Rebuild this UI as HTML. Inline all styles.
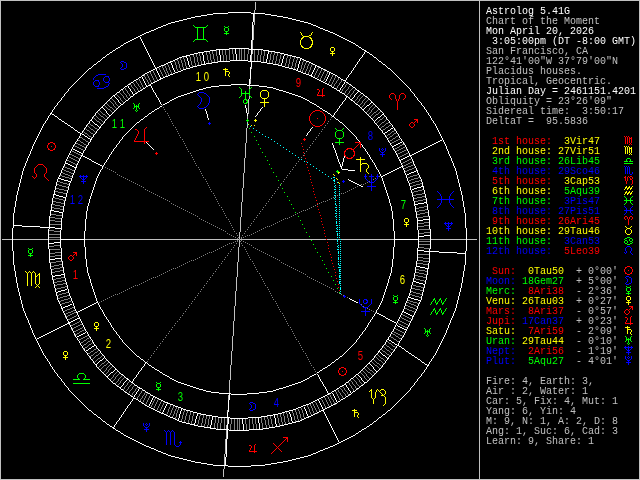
<!DOCTYPE html>
<html lang="en"><head><meta charset="utf-8"><title>Astrolog 5.41G - Chart of the Moment</title>
<style>
html,body{margin:0;padding:0;background:#000;overflow:hidden}
svg{display:block;will-change:transform;transform:translateZ(0)}
.px path{fill:none;stroke-width:1;shape-rendering:crispEdges}
.gl{fill:none;stroke-width:1;shape-rendering:crispEdges;stroke-linecap:square}
.hn{font-family:"Liberation Sans","DejaVu Sans",sans-serif;font-size:12.6px;text-anchor:middle;stroke:none;shape-rendering:auto}
.tx text{font-family:"Liberation Mono","DejaVu Sans Mono",monospace;font-size:10px;white-space:pre;}
</style></head><body>
<svg width="640" height="480" viewBox="0 0 640 480">
<rect width="640" height="480" fill="#000"/>
<g class="px" transform="translate(0,0.5)">
<path stroke="#c0c0c0" d="M0 0h640M0 1h1M479 1h1M639 1h1M0 2h1M255 2h1M479 2h1M639 2h1M0 3h1M255 3h1M479 3h1M639 3h1M0 4h1M255 4h1M479 4h1M639 4h1M0 5h1M255 5h1M479 5h1M639 5h1M0 6h1M255 6h1M479 6h1M639 6h1M0 7h1M255 7h1M479 7h1M639 7h1M0 8h1M255 8h1M479 8h1M639 8h1M0 9h1M255 9h1M479 9h1M639 9h1M0 10h1M254 10h1M479 10h1M639 10h1M0 11h1M254 11h1M479 11h1M639 11h1M0 12h1M254 12h1M479 12h1M639 12h1M0 13h1M479 13h1M639 13h1M0 14h1M254 14h1M479 14h1M639 14h1M0 15h1M254 15h1M479 15h1M639 15h1M0 16h1M254 16h1M479 16h1M639 16h1M0 17h1M254 17h1M479 17h1M639 17h1M0 18h1M254 18h1M479 18h1M639 18h1M0 19h1M254 19h1M479 19h1M639 19h1M0 20h1M254 20h1M479 20h1M639 20h1M0 21h1M254 21h1M479 21h1M639 21h1M0 22h1M254 22h1M479 22h1M639 22h1M0 23h1M254 23h1M479 23h1M639 23h1M0 24h1M254 24h1M479 24h1M639 24h1M0 25h1M253 25h1M479 25h1M639 25h1M0 26h1M253 26h1M479 26h1M639 26h1M0 27h1M253 27h1M479 27h1M639 27h1M0 28h1M253 28h1M479 28h1M639 28h1M0 29h1M253 29h1M479 29h1M639 29h1M0 30h1M253 30h1M479 30h1M639 30h1M0 31h1M253 31h1M479 31h1M639 31h1M0 32h1M253 32h1M479 32h1M639 32h1M0 33h1M253 33h1M479 33h1M639 33h1M0 34h1M253 34h1M479 34h1M639 34h1M0 35h1M253 35h1M479 35h1M639 35h1M0 36h1M253 36h1M479 36h1M639 36h1M0 37h1M253 37h1M479 37h1M639 37h1M0 38h1M253 38h1M479 38h1M639 38h1M0 39h1M253 39h1M479 39h1M639 39h1M0 40h1M252 40h1M479 40h1M639 40h1M0 41h1M252 41h1M479 41h1M639 41h1M0 42h1M252 42h1M479 42h1M639 42h1M0 43h1M252 43h1M479 43h1M639 43h1M0 44h1M252 44h1M479 44h1M639 44h1M0 45h1M252 45h1M479 45h1M639 45h1M0 46h1M252 46h1M479 46h1M639 46h1M0 47h1M252 47h1M479 47h1M639 47h1M0 48h1M252 48h1M479 48h1M639 48h1M0 49h1M479 49h1M639 49h1M0 50h1M252 50h1M479 50h1M639 50h1M0 51h1M252 51h1M479 51h1M639 51h1M0 52h1M252 52h1M479 52h1M639 52h1M0 53h1M252 53h1M479 53h1M639 53h1M0 54h1M479 54h1M639 54h1M0 55h1M251 55h1M479 55h1M639 55h1M0 56h1M251 56h1M479 56h1M639 56h1M0 57h1M251 57h1M479 57h1M639 57h1M0 58h1M251 58h1M479 58h1M639 58h1M0 59h1M251 59h1M479 59h1M639 59h1M0 60h1M251 60h1M479 60h1M639 60h1M0 61h1M479 61h1M639 61h1M0 62h1M479 62h1M639 62h1M0 63h1M479 63h1M639 63h1M0 64h1M479 64h1M639 64h1M0 65h1M479 65h1M639 65h1M0 66h1M479 66h1M639 66h1M0 67h1M251 67h1M479 67h1M639 67h1M0 68h1M251 68h1M479 68h1M639 68h1M0 69h1M479 69h1M639 69h1M0 70h1M479 70h1M639 70h1M0 71h1M479 71h1M639 71h1M0 72h1M479 72h1M639 72h1M0 73h1M479 73h1M639 73h1M0 74h1M479 74h1M639 74h1M0 75h1M479 75h1M639 75h1M0 76h1M479 76h1M639 76h1M0 77h1M479 77h1M639 77h1M0 78h1M479 78h1M639 78h1M0 79h1M250 79h1M479 79h1M639 79h1M0 80h1M250 80h1M479 80h1M639 80h1M0 81h1M250 81h1M479 81h1M639 81h1M0 82h1M250 82h1M479 82h1M639 82h1M0 83h1M250 83h1M479 83h1M639 83h1M0 84h1M479 84h1M639 84h1M0 85h1M479 85h1M639 85h1M0 86h1M249 86h1M479 86h1M639 86h1M0 87h1M249 87h1M479 87h1M639 87h1M0 88h1M249 88h1M479 88h1M639 88h1M0 89h1M479 89h1M639 89h1M0 90h1M479 90h1M639 90h1M0 91h1M479 91h1M639 91h1M0 92h1M479 92h1M639 92h1M0 93h1M479 93h1M639 93h1M0 94h1M479 94h1M639 94h1M0 95h1M479 95h1M639 95h1M0 96h1M249 96h1M479 96h1M639 96h1M0 97h1M249 97h1M479 97h1M639 97h1M0 98h1M249 98h1M479 98h1M639 98h1M0 99h1M248 99h1M479 99h1M639 99h1M0 100h1M248 100h1M479 100h1M639 100h1M0 101h1M248 101h1M479 101h1M639 101h1M0 102h1M248 102h1M479 102h1M639 102h1M0 103h1M248 103h1M479 103h1M639 103h1M0 104h1M248 104h1M479 104h1M639 104h1M0 105h1M248 105h1M479 105h1M639 105h1M0 106h1M248 106h1M479 106h1M639 106h1M0 107h1M248 107h1M479 107h1M639 107h1M0 108h1M248 108h1M479 108h1M639 108h1M0 109h1M248 109h1M479 109h1M639 109h1M0 110h1M248 110h1M479 110h1M639 110h1M0 111h1M248 111h1M479 111h1M639 111h1M0 112h1M248 112h1M479 112h1M639 112h1M0 113h1M248 113h1M479 113h1M639 113h1M0 114h1M479 114h1M639 114h1M0 115h1M479 115h1M639 115h1M0 116h1M247 116h1M479 116h1M639 116h1M0 117h1M247 117h1M479 117h1M639 117h1M0 118h1M247 118h1M479 118h1M639 118h1M0 119h1M479 119h1M639 119h1M0 120h1M479 120h1M639 120h1M0 121h1M479 121h1M639 121h1M0 122h1M247 122h1M479 122h1M639 122h1M0 123h1M247 123h1M479 123h1M639 123h1M0 124h1M479 124h1M639 124h1M0 125h1M247 125h1M479 125h1M639 125h1M0 126h1M247 126h1M479 126h1M639 126h1M0 127h1M247 127h1M479 127h1M639 127h1M0 128h1M246 128h1M479 128h1M639 128h1M0 129h1M246 129h1M479 129h1M639 129h1M0 130h1M246 130h1M479 130h1M639 130h1M0 131h1M246 131h1M479 131h1M639 131h1M0 132h1M246 132h1M479 132h1M639 132h1M0 133h1M246 133h1M479 133h1M639 133h1M0 134h1M246 134h1M479 134h1M639 134h1M0 135h1M246 135h1M479 135h1M639 135h1M0 136h1M246 136h1M479 136h1M639 136h1M0 137h1M246 137h1M479 137h1M639 137h1M0 138h1M246 138h1M479 138h1M639 138h1M0 139h1M246 139h1M479 139h1M639 139h1M0 140h1M246 140h1M479 140h1M639 140h1M0 141h1M246 141h1M479 141h1M639 141h1M0 142h1M246 142h1M479 142h1M639 142h1M0 143h1M245 143h1M479 143h1M639 143h1M0 144h1M245 144h1M479 144h1M639 144h1M0 145h1M245 145h1M479 145h1M639 145h1M0 146h1M245 146h1M479 146h1M639 146h1M0 147h1M245 147h1M479 147h1M639 147h1M0 148h1M245 148h1M479 148h1M639 148h1M0 149h1M245 149h1M479 149h1M639 149h1M0 150h1M245 150h1M479 150h1M639 150h1M0 151h1M245 151h1M479 151h1M639 151h1M0 152h1M245 152h1M479 152h1M639 152h1M0 153h1M245 153h1M479 153h1M639 153h1M0 154h1M245 154h1M479 154h1M639 154h1M0 155h1M245 155h1M479 155h1M639 155h1M0 156h1M245 156h1M479 156h1M639 156h1M0 157h1M245 157h1M479 157h1M639 157h1M0 158h1M244 158h1M479 158h1M639 158h1M0 159h1M244 159h1M479 159h1M639 159h1M0 160h1M244 160h1M479 160h1M639 160h1M0 161h1M244 161h1M479 161h1M639 161h1M0 162h1M244 162h1M479 162h1M639 162h1M0 163h1M244 163h1M479 163h1M639 163h1M0 164h1M244 164h1M479 164h1M639 164h1M0 165h1M244 165h1M479 165h1M639 165h1M0 166h1M244 166h1M479 166h1M639 166h1M0 167h1M244 167h1M479 167h1M639 167h1M0 168h1M244 168h1M479 168h1M639 168h1M0 169h1M244 169h1M479 169h1M639 169h1M0 170h1M244 170h1M479 170h1M639 170h1M0 171h1M244 171h1M479 171h1M639 171h1M0 172h1M244 172h1M479 172h1M639 172h1M0 173h1M243 173h1M479 173h1M639 173h1M0 174h1M243 174h1M479 174h1M639 174h1M0 175h1M243 175h1M479 175h1M639 175h1M0 176h1M243 176h1M479 176h1M639 176h1M0 177h1M243 177h1M479 177h1M639 177h1M0 178h1M243 178h1M479 178h1M639 178h1M0 179h1M243 179h1M479 179h1M639 179h1M0 180h1M243 180h1M479 180h1M639 180h1M0 181h1M243 181h1M479 181h1M639 181h1M0 182h1M243 182h1M479 182h1M639 182h1M0 183h1M243 183h1M479 183h1M639 183h1M0 184h1M243 184h1M479 184h1M639 184h1M0 185h1M243 185h1M479 185h1M639 185h1M0 186h1M243 186h1M479 186h1M639 186h1M0 187h1M243 187h1M479 187h1M639 187h1M0 188h1M242 188h1M479 188h1M639 188h1M0 189h1M242 189h1M479 189h1M639 189h1M0 190h1M242 190h1M479 190h1M639 190h1M0 191h1M242 191h1M479 191h1M639 191h1M0 192h1M242 192h1M479 192h1M639 192h1M0 193h1M242 193h1M479 193h1M639 193h1M0 194h1M242 194h1M479 194h1M639 194h1M0 195h1M242 195h1M479 195h1M639 195h1M0 196h1M242 196h1M479 196h1M639 196h1M0 197h1M242 197h1M479 197h1M639 197h1M0 198h1M242 198h1M479 198h1M639 198h1M0 199h1M242 199h1M479 199h1M639 199h1M0 200h1M242 200h1M479 200h1M639 200h1M0 201h1M242 201h1M479 201h1M639 201h1M0 202h1M241 202h1M479 202h1M639 202h1M0 203h1M241 203h1M479 203h1M639 203h1M0 204h1M241 204h1M479 204h1M639 204h1M0 205h1M241 205h1M479 205h1M639 205h1M0 206h1M241 206h1M479 206h1M639 206h1M0 207h1M241 207h1M479 207h1M639 207h1M0 208h1M241 208h1M479 208h1M639 208h1M0 209h1M241 209h1M479 209h1M639 209h1M0 210h1M241 210h1M479 210h1M639 210h1M0 211h1M241 211h1M479 211h1M639 211h1M0 212h1M241 212h1M479 212h1M639 212h1M0 213h1M241 213h1M479 213h1M639 213h1M0 214h1M241 214h1M479 214h1M639 214h1M0 215h1M241 215h1M479 215h1M639 215h1M0 216h1M241 216h1M479 216h1M639 216h1M0 217h1M240 217h1M479 217h1M639 217h1M0 218h1M240 218h1M479 218h1M639 218h1M0 219h1M240 219h1M479 219h1M639 219h1M0 220h1M240 220h1M479 220h1M639 220h1M0 221h1M240 221h1M479 221h1M639 221h1M0 222h1M240 222h1M479 222h1M639 222h1M0 223h1M240 223h1M479 223h1M639 223h1M0 224h1M240 224h1M479 224h1M639 224h1M0 225h1M240 225h1M479 225h1M639 225h1M0 226h1M240 226h1M479 226h1M639 226h1M0 227h1M240 227h1M479 227h1M639 227h1M0 228h1M240 228h1M479 228h1M639 228h1M0 229h1M240 229h1M479 229h1M639 229h1M0 230h1M240 230h1M479 230h1M639 230h1M0 231h1M240 231h1M479 231h1M639 231h1M0 232h1M239 232h1M479 232h1M639 232h1M0 233h1M239 233h1M479 233h1M639 233h1M0 234h1M239 234h1M479 234h1M639 234h1M0 235h1M239 235h1M479 235h1M639 235h1M0 236h1M239 236h1M479 236h1M639 236h1M0 237h1M239 237h1M479 237h1M639 237h1M0 238h1M239 238h1M479 238h1M639 238h1M0 239h1M2 239h10M13 239h35M85 239h154M240 239h86M327 239h10M338 239h2M341 239h53M431 239h35M467 239h10M479 239h1M639 239h1M0 240h1M239 240h1M479 240h1M639 240h1M0 241h1M239 241h1M479 241h1M639 241h1M0 242h1M239 242h1M479 242h1M639 242h1M0 243h1M239 243h1M479 243h1M639 243h1M0 244h1M239 244h1M479 244h1M639 244h1M0 245h1M239 245h1M479 245h1M639 245h1M0 246h1M239 246h1M479 246h1M639 246h1M0 247h1M238 247h1M479 247h1M639 247h1M0 248h1M238 248h1M479 248h1M639 248h1M0 249h1M238 249h1M479 249h1M639 249h1M0 250h1M238 250h1M479 250h1M639 250h1M0 251h1M238 251h1M479 251h1M639 251h1M0 252h1M238 252h1M479 252h1M639 252h1M0 253h1M238 253h1M479 253h1M639 253h1M0 254h1M238 254h1M479 254h1M639 254h1M0 255h1M238 255h1M479 255h1M639 255h1M0 256h1M238 256h1M479 256h1M639 256h1M0 257h1M238 257h1M479 257h1M639 257h1M0 258h1M238 258h1M479 258h1M639 258h1M0 259h1M238 259h1M479 259h1M639 259h1M0 260h1M238 260h1M479 260h1M639 260h1M0 261h1M238 261h1M479 261h1M639 261h1M0 262h1M237 262h1M479 262h1M639 262h1M0 263h1M237 263h1M479 263h1M639 263h1M0 264h1M237 264h1M479 264h1M639 264h1M0 265h1M237 265h1M479 265h1M639 265h1M0 266h1M237 266h1M479 266h1M639 266h1M0 267h1M237 267h1M479 267h1M639 267h1M0 268h1M237 268h1M479 268h1M639 268h1M0 269h1M237 269h1M479 269h1M639 269h1M0 270h1M237 270h1M479 270h1M639 270h1M0 271h1M237 271h1M479 271h1M639 271h1M0 272h1M237 272h1M479 272h1M639 272h1M0 273h1M237 273h1M479 273h1M639 273h1M0 274h1M237 274h1M479 274h1M639 274h1M0 275h1M237 275h1M479 275h1M639 275h1M0 276h1M237 276h1M479 276h1M639 276h1M0 277h1M236 277h1M479 277h1M639 277h1M0 278h1M236 278h1M479 278h1M639 278h1M0 279h1M236 279h1M479 279h1M639 279h1M0 280h1M236 280h1M479 280h1M639 280h1M0 281h1M236 281h1M479 281h1M639 281h1M0 282h1M236 282h1M479 282h1M639 282h1M0 283h1M236 283h1M479 283h1M639 283h1M0 284h1M236 284h1M479 284h1M639 284h1M0 285h1M236 285h1M479 285h1M639 285h1M0 286h1M236 286h1M479 286h1M639 286h1M0 287h1M236 287h1M479 287h1M639 287h1M0 288h1M236 288h1M479 288h1M639 288h1M0 289h1M236 289h1M479 289h1M639 289h1M0 290h1M236 290h1M479 290h1M639 290h1M0 291h1M235 291h1M479 291h1M639 291h1M0 292h1M235 292h1M479 292h1M639 292h1M0 293h1M235 293h1M479 293h1M639 293h1M0 294h1M235 294h1M479 294h1M639 294h1M0 295h1M235 295h1M479 295h1M639 295h1M0 296h1M235 296h1M479 296h1M639 296h1M0 297h1M235 297h1M479 297h1M639 297h1M0 298h1M235 298h1M479 298h1M639 298h1M0 299h1M235 299h1M479 299h1M639 299h1M0 300h1M235 300h1M479 300h1M639 300h1M0 301h1M235 301h1M479 301h1M639 301h1M0 302h1M235 302h1M479 302h1M639 302h1M0 303h1M235 303h1M479 303h1M639 303h1M0 304h1M235 304h1M479 304h1M639 304h1M0 305h1M235 305h1M479 305h1M639 305h1M0 306h1M234 306h1M479 306h1M639 306h1M0 307h1M234 307h1M479 307h1M639 307h1M0 308h1M234 308h1M479 308h1M639 308h1M0 309h1M234 309h1M479 309h1M639 309h1M0 310h1M234 310h1M479 310h1M639 310h1M0 311h1M234 311h1M479 311h1M639 311h1M0 312h1M234 312h1M479 312h1M639 312h1M0 313h1M234 313h1M479 313h1M639 313h1M0 314h1M234 314h1M479 314h1M639 314h1M0 315h1M234 315h1M479 315h1M639 315h1M0 316h1M234 316h1M479 316h1M639 316h1M0 317h1M234 317h1M479 317h1M639 317h1M0 318h1M234 318h1M479 318h1M639 318h1M0 319h1M234 319h1M479 319h1M639 319h1M0 320h1M234 320h1M479 320h1M639 320h1M0 321h1M233 321h1M479 321h1M639 321h1M0 322h1M233 322h1M479 322h1M639 322h1M0 323h1M233 323h1M479 323h1M639 323h1M0 324h1M233 324h1M479 324h1M639 324h1M0 325h1M233 325h1M479 325h1M639 325h1M0 326h1M233 326h1M479 326h1M639 326h1M0 327h1M233 327h1M479 327h1M639 327h1M0 328h1M233 328h1M479 328h1M639 328h1M0 329h1M233 329h1M479 329h1M639 329h1M0 330h1M233 330h1M479 330h1M639 330h1M0 331h1M233 331h1M479 331h1M639 331h1M0 332h1M233 332h1M479 332h1M639 332h1M0 333h1M233 333h1M479 333h1M639 333h1M0 334h1M233 334h1M479 334h1M639 334h1M0 335h1M233 335h1M479 335h1M639 335h1M0 336h1M232 336h1M479 336h1M639 336h1M0 337h1M232 337h1M479 337h1M639 337h1M0 338h1M232 338h1M479 338h1M639 338h1M0 339h1M232 339h1M479 339h1M639 339h1M0 340h1M232 340h1M479 340h1M639 340h1M0 341h1M232 341h1M479 341h1M639 341h1M0 342h1M232 342h1M479 342h1M639 342h1M0 343h1M232 343h1M479 343h1M639 343h1M0 344h1M232 344h1M479 344h1M639 344h1M0 345h1M232 345h1M479 345h1M639 345h1M0 346h1M232 346h1M479 346h1M639 346h1M0 347h1M232 347h1M479 347h1M639 347h1M0 348h1M232 348h1M479 348h1M639 348h1M0 349h1M232 349h1M479 349h1M639 349h1M0 350h1M232 350h1M479 350h1M639 350h1M0 351h1M231 351h1M479 351h1M639 351h1M0 352h1M231 352h1M479 352h1M639 352h1M0 353h1M231 353h1M479 353h1M639 353h1M0 354h1M231 354h1M479 354h1M639 354h1M0 355h1M231 355h1M479 355h1M639 355h1M0 356h1M231 356h1M479 356h1M639 356h1M0 357h1M231 357h1M479 357h1M639 357h1M0 358h1M231 358h1M479 358h1M639 358h1M0 359h1M231 359h1M479 359h1M639 359h1M0 360h1M231 360h1M479 360h1M639 360h1M0 361h1M231 361h1M479 361h1M639 361h1M0 362h1M231 362h1M479 362h1M639 362h1M0 363h1M231 363h1M479 363h1M639 363h1M0 364h1M231 364h1M479 364h1M639 364h1M0 365h1M230 365h1M479 365h1M639 365h1M0 366h1M230 366h1M479 366h1M639 366h1M0 367h1M230 367h1M479 367h1M639 367h1M0 368h1M230 368h1M479 368h1M639 368h1M0 369h1M230 369h1M479 369h1M639 369h1M0 370h1M230 370h1M479 370h1M639 370h1M0 371h1M230 371h1M479 371h1M639 371h1M0 372h1M230 372h1M479 372h1M639 372h1M0 373h1M230 373h1M479 373h1M639 373h1M0 374h1M230 374h1M479 374h1M639 374h1M0 375h1M230 375h1M479 375h1M639 375h1M0 376h1M230 376h1M479 376h1M639 376h1M0 377h1M230 377h1M479 377h1M639 377h1M0 378h1M230 378h1M479 378h1M639 378h1M0 379h1M230 379h1M479 379h1M639 379h1M0 380h1M229 380h1M479 380h1M639 380h1M0 381h1M229 381h1M479 381h1M639 381h1M0 382h1M229 382h1M479 382h1M639 382h1M0 383h1M229 383h1M479 383h1M639 383h1M0 384h1M229 384h1M479 384h1M639 384h1M0 385h1M229 385h1M479 385h1M639 385h1M0 386h1M229 386h1M479 386h1M639 386h1M0 387h1M229 387h1M479 387h1M639 387h1M0 388h1M229 388h1M479 388h1M639 388h1M0 389h1M229 389h1M479 389h1M639 389h1M0 390h1M229 390h1M479 390h1M639 390h1M0 391h1M229 391h1M479 391h1M639 391h1M0 392h1M229 392h1M479 392h1M639 392h1M0 393h1M479 393h1M639 393h1M0 394h1M479 394h1M639 394h1M0 395h1M228 395h1M479 395h1M639 395h1M0 396h1M228 396h1M479 396h1M639 396h1M0 397h1M228 397h1M479 397h1M639 397h1M0 398h1M228 398h1M479 398h1M639 398h1M0 399h1M228 399h1M479 399h1M639 399h1M0 400h1M479 400h1M639 400h1M0 401h1M479 401h1M639 401h1M0 402h1M479 402h1M639 402h1M0 403h1M479 403h1M639 403h1M0 404h1M479 404h1M639 404h1M0 405h1M479 405h1M639 405h1M0 406h1M479 406h1M639 406h1M0 407h1M479 407h1M639 407h1M0 408h1M479 408h1M639 408h1M0 409h1M479 409h1M639 409h1M0 410h1M227 410h1M479 410h1M639 410h1M0 411h1M227 411h1M479 411h1M639 411h1M0 412h1M479 412h1M639 412h1M0 413h1M479 413h1M639 413h1M0 414h1M479 414h1M639 414h1M0 415h1M479 415h1M639 415h1M0 416h1M479 416h1M639 416h1M0 417h1M479 417h1M639 417h1M0 418h1M227 418h1M479 418h1M639 418h1M0 419h1M227 419h1M479 419h1M639 419h1M0 420h1M227 420h1M479 420h1M639 420h1M0 421h1M227 421h1M479 421h1M639 421h1M0 422h1M227 422h1M479 422h1M639 422h1M0 423h1M227 423h1M479 423h1M639 423h1M0 424h1M479 424h1M639 424h1M0 425h1M226 425h1M479 425h1M639 425h1M0 426h1M226 426h1M479 426h1M639 426h1M0 427h1M226 427h1M479 427h1M639 427h1M0 428h1M226 428h1M479 428h1M639 428h1M0 429h1M479 429h1M639 429h1M0 430h1M226 430h1M479 430h1M639 430h1M0 431h1M226 431h1M479 431h1M639 431h1M0 432h1M226 432h1M479 432h1M639 432h1M0 433h1M226 433h1M479 433h1M639 433h1M0 434h1M226 434h1M479 434h1M639 434h1M0 435h1M226 435h1M479 435h1M639 435h1M0 436h1M226 436h1M479 436h1M639 436h1M0 437h1M226 437h1M479 437h1M639 437h1M0 438h1M226 438h1M479 438h1M639 438h1M0 439h1M225 439h1M479 439h1M639 439h1M0 440h1M225 440h1M479 440h1M639 440h1M0 441h1M225 441h1M479 441h1M639 441h1M0 442h1M225 442h1M479 442h1M639 442h1M0 443h1M225 443h1M479 443h1M639 443h1M0 444h1M225 444h1M479 444h1M639 444h1M0 445h1M225 445h1M479 445h1M639 445h1M0 446h1M225 446h1M479 446h1M639 446h1M0 447h1M225 447h1M479 447h1M639 447h1M0 448h1M225 448h1M479 448h1M639 448h1M0 449h1M225 449h1M479 449h1M639 449h1M0 450h1M225 450h1M479 450h1M639 450h1M0 451h1M225 451h1M479 451h1M639 451h1M0 452h1M225 452h1M479 452h1M639 452h1M0 453h1M225 453h1M479 453h1M639 453h1M0 454h1M224 454h1M479 454h1M639 454h1M0 455h1M224 455h1M479 455h1M639 455h1M0 456h1M224 456h1M479 456h1M639 456h1M0 457h1M224 457h1M479 457h1M639 457h1M0 458h1M224 458h1M479 458h1M639 458h1M0 459h1M224 459h1M479 459h1M639 459h1M0 460h1M224 460h1M479 460h1M639 460h1M0 461h1M224 461h1M479 461h1M639 461h1M0 462h1M224 462h1M479 462h1M639 462h1M0 463h1M224 463h1M479 463h1M639 463h1M0 464h1M224 464h1M479 464h1M639 464h1M0 465h1M479 465h1M639 465h1M0 466h1M224 466h1M479 466h1M639 466h1M0 467h1M224 467h1M479 467h1M639 467h1M0 468h1M224 468h1M479 468h1M639 468h1M0 469h1M223 469h1M479 469h1M639 469h1M0 470h1M223 470h1M479 470h1M639 470h1M0 471h1M223 471h1M479 471h1M639 471h1M0 472h1M223 472h1M479 472h1M639 472h1M0 473h1M223 473h1M479 473h1M639 473h1M0 474h1M223 474h1M479 474h1M639 474h1M0 475h1M223 475h1M479 475h1M639 475h1M0 476h1M223 476h1M479 476h1M639 476h1M0 477h1M479 477h1M639 477h1M0 478h1M479 478h1M639 478h1M0 479h640"/>
<path stroke="#ffffff" d="M228 12h23M213 13h15M251 13h14M207 14h6M253 14h1M265 14h6M201 15h6M253 15h1M271 15h6M195 16h6M253 16h1M277 16h6M191 17h4M253 17h1M283 17h5M187 18h4M253 18h1M288 18h4M183 19h4M253 19h1M292 19h4M179 20h4M253 20h1M296 20h4M175 21h4M253 21h1M300 21h4M171 22h4M252 22h1M304 22h4M168 23h3M252 23h1M308 23h3M166 24h2M252 24h1M311 24h2M163 25h3M252 25h1M313 25h3M161 26h2M252 26h1M316 26h2M158 27h3M252 27h1M318 27h2M156 28h2M252 28h1M320 28h3M154 29h2M252 29h1M323 29h2M151 30h3M252 30h1M325 30h3M149 31h2M252 31h1M328 31h2M146 32h3M252 32h1M330 32h3M144 33h2M252 33h1M333 33h2M142 34h2M252 34h1M335 34h2M140 35h2M252 35h1M337 35h2M138 36h2M252 36h1M339 36h2M136 37h2M140 37h1M252 37h1M341 37h2M134 38h2M140 38h1M252 38h1M343 38h2M132 39h2M141 39h1M252 39h1M345 39h2M130 40h2M141 40h1M251 40h1M347 40h2M128 41h2M142 41h1M251 41h1M349 41h2M126 42h2M142 42h1M251 42h1M351 42h2M124 43h2M143 43h1M251 43h1M353 43h2M123 44h1M143 44h1M251 44h1M355 44h1M121 45h2M144 45h1M251 45h1M356 45h2M120 46h1M144 46h1M251 46h1M358 46h1M118 47h2M145 47h1M251 47h1M359 47h2M116 48h2M145 48h1M229 48h20M251 48h1M361 48h1M115 49h1M146 49h1M216 49h13M235 49h1M249 49h14M362 49h2M113 50h2M146 50h1M210 50h6M219 50h1M235 50h1M251 50h1M263 50h6M364 50h2M112 51h1M147 51h1M204 51h6M219 51h1M235 51h1M251 51h1M268 51h7M365 51h2M110 52h2M147 52h1M198 52h6M219 52h1M235 52h1M251 52h1M268 52h1M275 52h5M364 52h1M367 52h2M109 53h1M148 53h1M194 53h4M202 53h1M219 53h1M235 53h1M251 53h1M268 53h1M280 53h4M364 53h1M369 53h1M107 54h2M148 54h1M190 54h4M202 54h1M219 54h1M236 54h1M251 54h1M267 54h1M284 54h4M363 54h1M370 54h2M106 55h1M149 55h1M186 55h4M203 55h1M220 55h1M236 55h1M250 55h1M267 55h1M284 55h1M288 55h4M362 55h1M372 55h1M105 56h1M149 56h1M182 56h5M203 56h1M220 56h1M236 56h1M250 56h1M267 56h1M283 56h1M292 56h4M362 56h1M373 56h1M103 57h2M150 57h1M179 57h3M186 57h1M203 57h1M220 57h1M236 57h1M250 57h1M267 57h1M283 57h1M296 57h4M361 57h1M374 57h2M102 58h1M150 58h1M177 58h2M187 58h1M203 58h1M220 58h1M236 58h1M250 58h1M267 58h1M283 58h1M300 58h2M360 58h1M376 58h1M101 59h1M151 59h1M175 59h2M187 59h1M203 59h1M220 59h1M236 59h1M250 59h1M266 59h1M282 59h1M300 59h1M302 59h2M359 59h1M377 59h1M100 60h1M151 60h1M173 60h2M187 60h1M203 60h1M220 60h1M230 60h18M250 60h1M266 60h1M282 60h1M300 60h1M304 60h2M359 60h1M378 60h1M98 61h2M152 61h1M170 61h3M188 61h1M204 61h1M218 61h12M248 61h13M266 61h1M282 61h1M299 61h1M306 61h3M358 61h1M379 61h2M97 62h1M152 62h1M168 62h3M188 62h1M204 62h1M212 62h6M251 62h1M261 62h6M282 62h1M299 62h1M309 62h2M357 62h1M381 62h1M96 63h1M153 63h1M166 63h2M171 63h1M188 63h1M204 63h1M206 63h6M251 63h1M267 63h6M281 63h1M299 63h1M311 63h2M357 63h1M382 63h1M94 64h2M153 64h1M164 64h2M171 64h1M188 64h1M201 64h5M251 64h1M273 64h5M281 64h1M298 64h1M313 64h2M356 64h1M383 64h2M93 65h1M154 65h1M161 65h3M172 65h1M189 65h1M197 65h4M251 65h1M278 65h4M298 65h1M315 65h2M355 65h1M385 65h1M92 66h1M154 66h1M159 66h2M172 66h1M189 66h1M193 66h4M251 66h1M282 66h3M298 66h1M315 66h1M317 66h2M355 66h1M386 66h1M91 67h1M155 67h1M157 67h2M172 67h1M190 67h3M250 67h1M285 67h4M298 67h1M315 67h1M319 67h2M354 67h1M387 67h1M89 68h2M155 68h2M173 68h1M186 68h4M250 68h1M289 68h4M297 68h1M314 68h1M321 68h2M353 68h1M388 68h2M88 69h1M153 69h2M156 69h1M173 69h1M183 69h3M250 69h1M293 69h3M297 69h1M314 69h1M323 69h2M353 69h1M390 69h1M87 70h1M151 70h2M156 70h1M174 70h1M181 70h2M250 70h1M296 70h2M313 70h1M325 70h2M352 70h1M391 70h1M86 71h1M149 71h2M157 71h1M174 71h1M178 71h3M250 71h1M298 71h3M313 71h1M327 71h2M351 71h1M392 71h1M85 72h1M147 72h2M157 72h1M175 72h3M250 72h1M301 72h2M312 72h1M329 72h2M351 72h1M393 72h1M84 73h1M145 73h2M158 73h1M173 73h2M250 73h1M303 73h3M312 73h1M329 73h1M331 73h2M350 73h1M394 73h1M83 74h1M144 74h1M158 74h1M170 74h3M250 74h1M306 74h3M311 74h1M329 74h1M333 74h2M349 74h1M395 74h1M82 75h1M142 75h2M159 75h1M168 75h2M250 75h1M309 75h3M328 75h1M335 75h2M348 75h1M396 75h1M81 76h1M141 76h1M159 76h1M165 76h3M250 76h1M311 76h2M328 76h1M337 76h1M348 76h1M397 76h1M80 77h1M139 77h2M142 77h1M160 77h1M163 77h2M250 77h1M313 77h2M327 77h1M338 77h2M347 77h1M398 77h1M79 78h1M138 78h1M142 78h1M160 78h3M250 78h1M315 78h2M327 78h1M340 78h1M346 78h1M399 78h1M78 79h1M136 79h2M143 79h1M159 79h2M249 79h1M317 79h2M326 79h1M341 79h2M346 79h1M400 79h1M77 80h1M134 80h2M143 80h1M157 80h2M249 80h1M319 80h2M326 80h1M343 80h3M401 80h1M76 81h1M133 81h1M144 81h1M155 81h2M249 81h1M321 81h2M325 81h1M345 81h1M402 81h1M75 82h1M131 82h2M144 82h1M153 82h2M249 82h1M323 82h2M344 82h1M346 82h2M403 82h1M74 83h1M130 83h1M145 83h1M151 83h2M249 83h1M325 83h2M344 83h1M348 83h1M404 83h1M73 84h1M128 84h2M145 84h1M150 84h1M231 84h16M249 84h1M327 84h2M343 84h1M349 84h2M405 84h1M72 85h1M127 85h1M146 85h1M148 85h3M219 85h12M247 85h12M329 85h2M342 85h1M351 85h1M406 85h1M71 86h1M125 86h2M128 86h1M146 86h2M151 86h1M211 86h8M259 86h8M331 86h1M342 86h1M352 86h1M407 86h1M70 87h1M124 87h1M128 87h1M145 87h1M151 87h1M206 87h5M267 87h6M332 87h2M341 87h1M353 87h2M408 87h1M69 88h1M123 88h1M129 88h1M143 88h2M152 88h1M203 88h3M273 88h3M334 88h2M340 88h1M355 88h1M409 88h1M68 89h1M121 89h2M130 89h1M142 89h1M152 89h1M199 89h4M276 89h3M336 89h1M340 89h1M356 89h1M410 89h1M68 90h1M120 90h1M130 90h1M140 90h2M153 90h1M196 90h3M279 90h4M337 90h3M357 90h2M410 90h1M67 91h1M119 91h1M131 91h1M138 91h2M153 91h1M193 91h3M283 91h3M339 91h1M358 91h2M411 91h1M66 92h1M117 92h2M132 92h1M137 92h1M154 92h1M190 92h3M286 92h3M340 92h2M357 92h1M360 92h1M412 92h1M65 93h1M116 93h1M132 93h1M135 93h2M155 93h1M187 93h3M289 93h3M342 93h2M356 93h1M361 93h2M413 93h1M64 94h1M115 94h1M133 94h2M155 94h1M184 94h3M292 94h3M344 94h1M355 94h1M363 94h1M414 94h1M64 95h1M113 95h2M133 95h1M156 95h1M181 95h3M295 95h3M345 95h1M354 95h1M364 95h1M414 95h1M63 96h1M112 96h1M114 96h1M131 96h2M156 96h1M178 96h3M298 96h3M346 96h2M354 96h1M365 96h2M415 96h1M62 97h1M111 97h1M115 97h1M130 97h1M157 97h1M176 97h2M301 97h2M346 97h1M348 97h1M353 97h1M367 97h1M416 97h1M61 98h1M110 98h1M116 98h1M129 98h1M158 98h1M174 98h2M303 98h2M345 98h1M349 98h1M352 98h1M368 98h1M417 98h1M61 99h1M109 99h1M117 99h1M128 99h1M158 99h1M172 99h2M305 99h2M345 99h1M350 99h2M369 99h1M417 99h1M60 100h1M108 100h1M118 100h1M126 100h2M159 100h1M170 100h2M307 100h2M344 100h1M351 100h2M370 100h1M418 100h1M59 101h1M107 101h1M118 101h1M125 101h1M159 101h1M169 101h1M309 101h1M343 101h1M353 101h1M371 101h1M419 101h1M58 102h1M106 102h1M119 102h1M124 102h1M160 102h1M167 102h2M310 102h2M342 102h1M354 102h1M371 102h2M420 102h1M57 103h1M105 103h1M120 103h1M123 103h1M160 103h1M165 103h2M312 103h2M342 103h1M355 103h1M370 103h1M373 103h1M421 103h1M57 104h1M104 104h1M121 104h2M161 104h1M163 104h2M314 104h2M341 104h1M356 104h2M369 104h1M374 104h1M421 104h1M56 105h1M103 105h1M120 105h1M245 105h1M316 105h1M340 105h1M358 105h1M367 105h2M375 105h1M422 105h1M55 106h1M102 106h1M119 106h1M160 106h2M245 106h1M317 106h2M339 106h1M359 106h1M366 106h1M376 106h1M423 106h1M54 107h1M101 107h2M118 107h1M159 107h1M245 107h1M262 107h1M319 107h1M339 107h1M360 107h1M365 107h1M377 107h1M424 107h1M54 108h1M100 108h1M103 108h1M117 108h1M157 108h2M246 108h1M261 108h1M320 108h2M338 108h1M361 108h1M364 108h1M378 108h1M424 108h1M53 109h1M99 109h1M104 109h1M116 109h1M155 109h2M205 109h1M246 109h1M260 109h1M322 109h1M337 109h1M362 109h2M379 109h1M425 109h1M52 110h1M98 110h1M105 110h1M115 110h1M154 110h1M205 110h1M246 110h1M260 110h1M323 110h2M337 110h1M363 110h1M380 110h1M426 110h1M52 111h1M97 111h1M106 111h1M114 111h1M152 111h2M206 111h1M246 111h1M259 111h1M325 111h2M336 111h1M364 111h1M381 111h1M426 111h1M51 112h1M96 112h1M106 112h1M113 112h1M151 112h1M206 112h1M246 112h1M258 112h1M327 112h1M335 112h1M365 112h1M382 112h1M427 112h1M50 113h2M95 113h1M107 113h1M112 113h1M149 113h2M206 113h1M247 113h1M257 113h1M328 113h2M334 113h1M366 113h1M383 113h1M428 113h1M50 114h1M52 114h2M95 114h1M108 114h1M111 114h1M148 114h1M207 114h1M247 114h1M257 114h1M330 114h1M334 114h1M367 114h1M382 114h2M428 114h1M49 115h1M54 115h1M94 115h1M109 115h2M147 115h1M207 115h1M247 115h1M256 115h1M331 115h1M333 115h1M368 115h1M381 115h1M384 115h1M429 115h1M48 116h1M55 116h2M93 116h1M109 116h1M145 116h2M207 116h1M255 116h1M332 116h2M369 116h1M380 116h1M385 116h1M430 116h1M48 117h1M57 117h1M92 117h1M108 117h1M144 117h1M207 117h1M334 117h1M370 117h1M378 117h2M386 117h1M430 117h1M47 118h1M58 118h1M92 118h1M107 118h1M143 118h1M208 118h1M335 118h1M371 118h1M377 118h1M386 118h1M431 118h1M47 119h1M59 119h2M91 119h1M106 119h1M141 119h2M208 119h1M336 119h2M372 119h1M376 119h1M387 119h1M431 119h1M46 120h1M61 120h1M90 120h2M105 120h1M140 120h1M338 120h1M373 120h1M375 120h1M388 120h1M432 120h1M45 121h1M62 121h2M89 121h1M92 121h1M104 121h1M139 121h1M339 121h1M374 121h1M389 121h1M433 121h1M45 122h1M64 122h1M89 122h1M93 122h1M104 122h1M137 122h2M340 122h2M374 122h1M389 122h1M433 122h1M44 123h1M65 123h2M88 123h1M94 123h1M103 123h1M136 123h1M342 123h1M375 123h1M390 123h1M434 123h1M43 124h1M67 124h1M87 124h1M95 124h2M102 124h1M135 124h1M343 124h1M376 124h1M391 124h1M435 124h1M43 125h1M68 125h2M86 125h1M97 125h1M101 125h1M134 125h1M344 125h1M377 125h1M392 125h1M435 125h1M42 126h1M70 126h1M86 126h1M98 126h1M100 126h1M133 126h1M345 126h1M378 126h1M392 126h1M436 126h1M42 127h1M71 127h2M85 127h1M99 127h2M132 127h1M312 127h1M346 127h1M378 127h1M393 127h1M436 127h1M41 128h1M73 128h1M84 128h1M99 128h1M131 128h1M311 128h1M347 128h1M379 128h1M391 128h2M394 128h1M437 128h1M41 129h1M74 129h1M84 129h1M98 129h1M130 129h1M310 129h1M348 129h1M380 129h1M390 129h1M394 129h1M437 129h1M40 130h1M75 130h2M83 130h1M97 130h1M129 130h1M310 130h1M349 130h1M381 130h1M388 130h2M395 130h1M438 130h1M40 131h1M77 131h1M82 131h1M96 131h1M128 131h1M309 131h1M350 131h1M382 131h1M387 131h1M396 131h1M438 131h1M39 132h1M78 132h2M82 132h1M96 132h1M127 132h1M308 132h1M351 132h1M382 132h1M385 132h2M396 132h1M439 132h1M39 133h1M80 133h2M95 133h1M126 133h1M307 133h1M352 133h1M383 133h2M397 133h1M439 133h1M38 134h1M80 134h1M82 134h2M94 134h1M125 134h1M307 134h1M353 134h1M384 134h1M398 134h1M440 134h1M38 135h1M80 135h1M84 135h1M93 135h1M124 135h1M306 135h1M354 135h1M385 135h1M398 135h1M440 135h1M37 136h1M79 136h1M85 136h2M93 136h1M123 136h1M355 136h1M385 136h1M399 136h1M441 136h1M37 137h1M79 137h1M87 137h1M92 137h1M122 137h1M356 137h1M386 137h1M399 137h1M441 137h1M36 138h1M78 138h1M88 138h2M91 138h1M122 138h1M356 138h1M387 138h1M400 138h1M442 138h1M36 139h1M77 139h1M90 139h2M121 139h1M357 139h1M387 139h1M401 139h1M442 139h1M35 140h1M77 140h1M90 140h1M120 140h1M358 140h1M388 140h1M401 140h1M440 140h2M443 140h1M35 141h1M76 141h1M90 141h1M119 141h1M359 141h1M388 141h1M402 141h1M438 141h2M443 141h1M34 142h1M75 142h1M89 142h1M119 142h1M146 142h1M389 142h1M400 142h2M403 142h1M436 142h2M444 142h1M34 143h1M75 143h1M88 143h1M118 143h1M147 143h1M332 143h1M390 143h1M398 143h2M403 143h1M434 143h2M444 143h1M33 144h1M74 144h1M88 144h1M117 144h1M148 144h1M332 144h1M361 144h1M390 144h1M396 144h2M404 144h1M432 144h2M445 144h1M33 145h1M73 145h1M87 145h1M116 145h1M149 145h1M333 145h1M362 145h1M391 145h1M394 145h2M405 145h1M430 145h2M445 145h1M32 146h1M73 146h1M86 146h1M116 146h1M150 146h1M333 146h1M362 146h1M392 146h2M405 146h1M428 146h2M446 146h1M32 147h1M72 147h1M86 147h1M115 147h1M151 147h1M333 147h1M363 147h1M392 147h1M406 147h1M426 147h2M446 147h1M32 148h1M72 148h1M85 148h1M114 148h1M152 148h1M334 148h1M364 148h1M393 148h1M406 148h1M424 148h2M446 148h1M31 149h1M71 149h1M73 149h2M85 149h1M113 149h1M153 149h1M334 149h1M365 149h1M393 149h1M407 149h1M422 149h2M447 149h1M31 150h1M71 150h1M75 150h2M84 150h1M113 150h1M335 150h1M365 150h1M394 150h1M407 150h1M420 150h2M447 150h1M30 151h1M70 151h1M77 151h2M83 151h1M112 151h1M335 151h1M366 151h1M395 151h1M408 151h1M418 151h2M448 151h1M30 152h1M70 152h1M79 152h2M83 152h1M111 152h1M335 152h1M367 152h1M395 152h1M408 152h1M416 152h2M448 152h1M30 153h1M69 153h1M81 153h2M111 153h1M336 153h1M367 153h1M396 153h1M409 153h1M414 153h2M448 153h1M29 154h1M69 154h1M82 154h1M110 154h1M336 154h1M368 154h1M396 154h1M409 154h1M412 154h2M449 154h1M29 155h1M68 155h1M81 155h2M109 155h1M336 155h1M369 155h1M397 155h1M409 155h3M449 155h1M28 156h1M68 156h1M81 156h1M83 156h2M109 156h1M337 156h1M344 156h1M369 156h1M397 156h1M407 156h2M410 156h1M450 156h1M28 157h1M67 157h1M80 157h1M85 157h2M108 157h1M337 157h1M344 157h1M370 157h1M398 157h1M405 157h2M411 157h1M450 157h1M27 158h1M67 158h1M80 158h1M87 158h2M108 158h1M337 158h1M343 158h1M370 158h1M398 158h1M403 158h2M411 158h1M451 158h1M27 159h1M66 159h1M79 159h1M89 159h2M107 159h1M338 159h1M343 159h1M371 159h1M399 159h1M401 159h2M412 159h1M451 159h1M27 160h1M66 160h1M79 160h1M91 160h1M106 160h1M338 160h1M343 160h1M372 160h1M399 160h2M412 160h1M451 160h1M26 161h1M65 161h1M78 161h1M92 161h2M106 161h1M338 161h1M343 161h1M372 161h1M400 161h1M413 161h1M452 161h1M26 162h1M65 162h1M78 162h1M94 162h2M105 162h1M339 162h1M342 162h1M373 162h1M400 162h1M413 162h1M452 162h1M25 163h1M65 163h3M77 163h1M96 163h2M104 163h1M339 163h1M342 163h1M374 163h1M401 163h1M413 163h1M453 163h1M25 164h1M64 164h1M68 164h2M77 164h1M98 164h2M104 164h1M340 164h1M342 164h1M374 164h1M401 164h1M414 164h1M453 164h1M25 165h1M64 165h1M70 165h2M76 165h1M100 165h2M103 165h1M340 165h1M342 165h1M375 165h1M402 165h1M414 165h1M453 165h1M24 166h1M63 166h1M72 166h2M76 166h1M102 166h1M340 166h2M375 166h1M401 166h2M415 166h1M454 166h1M24 167h1M63 167h1M74 167h3M102 167h1M341 167h1M376 167h1M399 167h2M402 167h1M415 167h1M454 167h1M23 168h1M62 168h1M75 168h1M102 168h1M341 168h1M376 168h1M397 168h2M403 168h1M416 168h1M455 168h1M23 169h1M62 169h1M75 169h1M101 169h1M342 169h6M377 169h1M395 169h2M403 169h1M416 169h1M455 169h1M23 170h1M61 170h1M74 170h1M100 170h1M348 170h7M378 170h1M393 170h2M404 170h1M416 170h2M455 170h1M22 171h1M61 171h1M74 171h1M100 171h1M378 171h1M391 171h2M404 171h1M414 171h2M417 171h1M456 171h1M22 172h1M61 172h1M74 172h1M99 172h1M379 172h1M389 172h2M404 172h1M411 172h3M417 172h1M456 172h1M22 173h1M60 173h1M73 173h1M99 173h1M379 173h1M387 173h2M405 173h1M409 173h2M418 173h1M456 173h1M22 174h1M60 174h1M73 174h1M98 174h1M380 174h1M385 174h2M405 174h1M407 174h2M418 174h1M456 174h1M21 175h1M59 175h1M72 175h1M98 175h1M380 175h1M383 175h2M406 175h1M419 175h1M457 175h1M21 176h1M59 176h1M72 176h1M97 176h1M381 176h2M406 176h1M419 176h1M457 176h1M21 177h1M58 177h1M72 177h1M97 177h1M381 177h1M406 177h1M420 177h1M457 177h1M21 178h1M58 178h3M71 178h1M96 178h1M382 178h1M407 178h1M420 178h1M457 178h1M20 179h1M57 179h1M61 179h3M71 179h1M96 179h1M348 179h1M382 179h1M407 179h1M421 179h1M458 179h1M20 180h1M57 180h1M64 180h4M71 180h1M96 180h1M349 180h2M382 180h1M407 180h1M421 180h1M458 180h1M20 181h1M57 181h1M68 181h3M95 181h1M351 181h2M383 181h1M408 181h1M421 181h1M458 181h1M20 182h1M56 182h1M70 182h1M95 182h1M353 182h2M383 182h1M408 182h1M422 182h1M458 182h1M19 183h1M56 183h1M69 183h1M95 183h1M355 183h2M383 183h1M409 183h1M422 183h1M459 183h1M19 184h1M56 184h1M69 184h1M94 184h1M357 184h2M384 184h1M409 184h1M422 184h1M459 184h1M19 185h1M56 185h1M69 185h1M94 185h1M359 185h2M384 185h1M409 185h1M422 185h1M459 185h1M19 186h1M55 186h1M68 186h1M94 186h1M361 186h2M384 186h1M410 186h1M421 186h3M459 186h1M18 187h1M55 187h1M68 187h1M93 187h1M385 187h1M410 187h1M417 187h4M423 187h1M460 187h1M18 188h1M55 188h1M68 188h1M93 188h1M385 188h1M410 188h1M414 188h3M423 188h1M460 188h1M18 189h1M55 189h1M68 189h1M93 189h1M385 189h1M410 189h1M412 189h2M423 189h1M460 189h1M18 190h1M54 190h1M67 190h1M92 190h1M386 190h1M411 190h1M424 190h1M460 190h1M17 191h1M54 191h1M67 191h1M92 191h1M386 191h1M411 191h1M424 191h1M461 191h1M17 192h1M54 192h1M67 192h1M92 192h1M386 192h1M411 192h1M424 192h1M461 192h1M17 193h1M54 193h1M66 193h1M91 193h1M387 193h1M412 193h1M424 193h1M461 193h1M17 194h1M53 194h3M66 194h1M91 194h1M387 194h1M412 194h1M425 194h1M461 194h1M16 195h1M53 195h1M56 195h3M66 195h1M91 195h1M387 195h1M412 195h1M425 195h1M462 195h1M16 196h1M53 196h1M59 196h4M66 196h1M90 196h1M388 196h1M412 196h1M425 196h1M462 196h1M16 197h1M53 197h1M63 197h3M90 197h1M388 197h1M413 197h1M425 197h1M462 197h1M16 198h1M52 198h1M65 198h1M90 198h1M388 198h1M413 198h1M426 198h1M462 198h1M16 199h1M52 199h1M65 199h1M89 199h1M389 199h1M413 199h1M426 199h1M462 199h1M16 200h1M52 200h1M65 200h1M89 200h1M389 200h1M413 200h1M426 200h1M462 200h1M15 201h1M52 201h1M64 201h1M89 201h1M389 201h1M414 201h1M426 201h1M463 201h1M15 202h1M52 202h1M64 202h1M89 202h1M389 202h1M414 202h1M424 202h3M463 202h1M15 203h1M52 203h1M64 203h1M88 203h1M390 203h1M414 203h1M418 203h6M426 203h1M463 203h1M15 204h1M51 204h1M64 204h1M88 204h1M390 204h1M414 204h4M427 204h1M463 204h1M15 205h1M51 205h1M64 205h1M88 205h1M390 205h1M414 205h1M427 205h1M463 205h1M15 206h1M51 206h1M63 206h1M87 206h1M391 206h1M415 206h1M427 206h1M463 206h1M14 207h1M51 207h1M63 207h1M87 207h1M391 207h1M415 207h1M427 207h1M464 207h1M14 208h1M51 208h1M63 208h1M87 208h1M391 208h1M415 208h1M427 208h1M464 208h1M14 209h1M51 209h1M63 209h1M87 209h1M391 209h1M415 209h1M427 209h1M464 209h1M14 210h1M50 210h4M63 210h1M87 210h1M391 210h1M415 210h1M428 210h1M464 210h1M14 211h1M50 211h1M54 211h5M63 211h1M86 211h1M392 211h1M415 211h1M428 211h1M464 211h1M14 212h1M50 212h1M59 212h4M86 212h1M392 212h1M416 212h1M428 212h1M464 212h1M13 213h1M50 213h1M62 213h1M86 213h1M392 213h1M416 213h1M428 213h1M465 213h1M13 214h1M50 214h1M62 214h1M86 214h1M392 214h1M416 214h1M428 214h1M465 214h1M13 215h1M50 215h1M62 215h1M86 215h1M392 215h1M416 215h1M428 215h1M465 215h1M13 216h1M49 216h1M62 216h1M86 216h1M392 216h1M416 216h1M429 216h1M465 216h1M13 217h1M49 217h1M62 217h1M86 217h1M392 217h1M416 217h1M429 217h1M465 217h1M13 218h1M49 218h1M61 218h1M86 218h1M392 218h1M417 218h1M429 218h1M465 218h1M13 219h1M49 219h1M61 219h1M85 219h1M393 219h1M417 219h1M423 219h7M465 219h1M13 220h1M49 220h1M61 220h1M85 220h1M393 220h1M417 220h6M429 220h1M465 220h1M13 221h1M49 221h1M61 221h1M85 221h1M393 221h1M417 221h1M429 221h1M465 221h1M13 222h1M49 222h1M61 222h1M85 222h1M393 222h1M417 222h1M429 222h1M465 222h1M13 223h1M49 223h1M61 223h1M85 223h1M393 223h1M417 223h1M429 223h1M465 223h1M13 224h1M49 224h1M61 224h1M85 224h1M393 224h1M417 224h1M429 224h1M465 224h1M13 225h9M49 225h1M61 225h1M85 225h1M393 225h1M417 225h1M429 225h1M465 225h1M13 226h1M22 226h18M49 226h1M61 226h1M85 226h1M393 226h1M417 226h1M429 226h1M465 226h1M13 227h1M40 227h15M61 227h1M85 227h1M393 227h1M417 227h1M429 227h1M465 227h1M12 228h1M49 228h1M55 228h7M85 228h1M393 228h1M417 228h1M429 228h1M466 228h1M12 229h1M48 229h1M61 229h1M85 229h1M393 229h1M417 229h1M430 229h1M466 229h1M12 230h1M48 230h1M60 230h1M85 230h1M393 230h1M418 230h1M430 230h1M466 230h1M12 231h1M48 231h1M60 231h1M84 231h1M394 231h1M418 231h1M430 231h1M466 231h1M12 232h1M48 232h1M60 232h1M84 232h1M394 232h1M418 232h1M430 232h1M466 232h1M12 233h1M48 233h1M60 233h1M84 233h1M394 233h1M418 233h1M430 233h1M466 233h1M12 234h1M48 234h1M60 234h1M84 234h1M394 234h1M418 234h1M430 234h1M466 234h1M12 235h1M48 235h1M60 235h1M84 235h1M394 235h1M418 235h1M424 235h7M466 235h1M12 236h1M48 236h1M60 236h1M84 236h1M394 236h1M418 236h6M430 236h1M466 236h1M12 237h1M48 237h1M60 237h1M84 237h1M394 237h1M418 237h1M430 237h1M466 237h1M12 238h1M48 238h1M60 238h1M84 238h1M394 238h1M418 238h1M430 238h1M466 238h1M12 239h1M48 239h1M60 239h25M394 239h25M430 239h1M466 239h1M12 240h1M48 240h1M60 240h1M84 240h1M394 240h1M418 240h1M430 240h1M466 240h1M12 241h1M48 241h1M60 241h1M84 241h1M394 241h1M418 241h1M430 241h1M466 241h1M12 242h1M48 242h1M54 242h7M84 242h1M394 242h1M418 242h1M430 242h1M466 242h1M12 243h1M48 243h6M60 243h1M84 243h1M394 243h1M418 243h1M430 243h1M466 243h1M12 244h1M48 244h1M60 244h1M84 244h1M394 244h1M418 244h1M430 244h1M466 244h1M12 245h1M48 245h1M60 245h1M84 245h1M394 245h1M418 245h1M430 245h1M466 245h1M12 246h1M48 246h1M60 246h1M84 246h1M394 246h1M418 246h1M430 246h1M466 246h1M12 247h1M48 247h1M60 247h1M85 247h1M393 247h1M418 247h1M430 247h1M466 247h1M12 248h1M48 248h1M61 248h1M85 248h1M393 248h1M417 248h1M430 248h1M466 248h1M12 249h1M49 249h1M61 249h1M85 249h1M393 249h1M417 249h1M429 249h1M466 249h1M12 250h1M49 250h1M61 250h1M85 250h1M393 250h1M417 250h7M429 250h1M466 250h1M13 251h1M49 251h1M61 251h1M85 251h1M393 251h1M417 251h1M424 251h15M465 251h1M13 252h1M49 252h1M61 252h1M85 252h1M393 252h1M417 252h1M429 252h1M439 252h18M465 252h1M13 253h1M49 253h1M61 253h1M85 253h1M393 253h1M417 253h1M429 253h1M457 253h9M13 254h1M49 254h1M61 254h1M85 254h1M393 254h1M417 254h1M429 254h1M465 254h1M13 255h1M49 255h1M61 255h1M85 255h1M393 255h1M417 255h1M429 255h1M465 255h1M13 256h1M49 256h1M61 256h1M85 256h1M393 256h1M417 256h1M429 256h1M465 256h1M13 257h1M49 257h1M61 257h1M85 257h1M393 257h1M417 257h1M429 257h1M465 257h1M13 258h1M49 258h1M55 258h7M85 258h1M393 258h1M417 258h1M429 258h1M465 258h1M13 259h1M49 259h6M61 259h1M86 259h1M392 259h1M417 259h1M429 259h1M465 259h1M13 260h1M49 260h1M61 260h1M86 260h1M392 260h1M417 260h1M429 260h1M465 260h1M13 261h1M49 261h1M62 261h1M86 261h1M392 261h1M416 261h1M429 261h1M465 261h1M13 262h1M49 262h1M62 262h1M86 262h1M392 262h1M416 262h1M429 262h1M465 262h1M13 263h1M50 263h1M62 263h1M86 263h1M392 263h1M416 263h1M428 263h1M465 263h1M13 264h1M50 264h1M62 264h1M86 264h1M392 264h1M416 264h1M428 264h1M465 264h1M14 265h1M50 265h1M62 265h1M86 265h1M392 265h1M416 265h1M428 265h1M464 265h1M14 266h1M50 266h1M62 266h1M86 266h1M392 266h1M416 266h4M428 266h1M464 266h1M14 267h1M50 267h1M63 267h1M87 267h1M391 267h1M415 267h1M420 267h5M428 267h1M464 267h1M14 268h1M50 268h1M63 268h1M87 268h1M391 268h1M415 268h1M425 268h4M464 268h1M14 269h1M51 269h1M63 269h1M87 269h1M391 269h1M415 269h1M427 269h1M464 269h1M14 270h1M51 270h1M63 270h1M87 270h1M391 270h1M415 270h1M427 270h1M464 270h1M15 271h1M51 271h1M63 271h1M87 271h1M391 271h1M415 271h1M427 271h1M463 271h1M15 272h1M51 272h1M63 272h1M87 272h1M391 272h1M415 272h1M427 272h1M463 272h1M15 273h1M51 273h1M64 273h1M88 273h1M390 273h1M414 273h1M427 273h1M463 273h1M15 274h1M51 274h1M61 274h4M88 274h1M390 274h1M414 274h1M427 274h1M463 274h1M15 275h1M52 275h1M55 275h6M64 275h1M88 275h1M390 275h1M414 275h1M426 275h1M463 275h1M15 276h1M52 276h3M64 276h1M89 276h1M389 276h1M414 276h1M426 276h1M463 276h1M16 277h1M52 277h1M64 277h1M89 277h1M389 277h1M414 277h1M426 277h1M462 277h1M16 278h1M52 278h1M65 278h1M89 278h1M389 278h1M413 278h1M426 278h1M462 278h1M16 279h1M52 279h1M65 279h1M90 279h1M388 279h1M413 279h1M426 279h1M462 279h1M16 280h1M53 280h1M65 280h1M90 280h1M388 280h1M413 280h1M425 280h1M462 280h1M16 281h1M53 281h1M65 281h1M90 281h1M388 281h1M413 281h3M425 281h1M462 281h1M16 282h1M53 282h1M66 282h1M90 282h1M388 282h1M412 282h1M416 282h3M425 282h1M462 282h1M17 283h1M53 283h1M66 283h1M91 283h1M387 283h1M412 283h1M419 283h4M425 283h1M461 283h1M17 284h1M54 284h1M66 284h1M91 284h1M387 284h1M412 284h1M423 284h2M461 284h1M17 285h1M54 285h1M67 285h1M91 285h1M387 285h1M411 285h1M424 285h1M461 285h1M17 286h1M54 286h1M67 286h1M92 286h1M386 286h1M411 286h1M424 286h1M461 286h1M17 287h1M54 287h1M67 287h1M92 287h1M386 287h1M411 287h1M424 287h1M461 287h1M18 288h1M55 288h1M67 288h1M92 288h1M386 288h1M411 288h1M423 288h1M460 288h1M18 289h1M55 289h1M65 289h2M68 289h1M93 289h1M385 289h1M410 289h1M423 289h1M460 289h1M18 290h1M55 290h1M61 290h4M68 290h1M93 290h1M385 290h1M410 290h1M423 290h1M460 290h1M18 291h1M55 291h1M58 291h3M68 291h1M93 291h1M385 291h1M410 291h1M423 291h1M460 291h1M19 292h1M56 292h2M68 292h1M94 292h1M384 292h1M410 292h1M422 292h1M459 292h1M19 293h1M56 293h1M69 293h1M94 293h1M384 293h1M409 293h1M422 293h1M459 293h1M19 294h1M56 294h1M69 294h1M94 294h1M384 294h1M409 294h1M422 294h1M459 294h1M19 295h1M56 295h1M69 295h1M95 295h1M383 295h1M409 295h1M422 295h1M459 295h1M20 296h1M57 296h1M70 296h1M95 296h1M383 296h1M408 296h1M421 296h1M458 296h1M20 297h1M57 297h1M70 297h1M95 297h1M383 297h1M408 297h3M421 297h1M458 297h1M20 298h1M57 298h1M71 298h1M96 298h1M349 298h1M382 298h1M407 298h1M411 298h3M421 298h1M458 298h1M20 299h1M57 299h1M71 299h1M96 299h1M350 299h2M382 299h1M407 299h1M414 299h4M421 299h1M458 299h1M21 300h1M58 300h1M71 300h1M96 300h1M352 300h2M382 300h1M407 300h1M418 300h3M457 300h1M21 301h1M58 301h1M72 301h1M97 301h1M354 301h2M381 301h1M406 301h1M420 301h1M457 301h1M21 302h1M59 302h1M72 302h1M96 302h2M356 302h2M381 302h1M406 302h1M419 302h1M457 302h1M21 303h1M59 303h1M73 303h1M94 303h2M98 303h1M380 303h1M405 303h1M419 303h1M457 303h1M22 304h1M60 304h1M70 304h2M73 304h1M92 304h2M98 304h1M380 304h1M405 304h1M418 304h1M456 304h1M22 305h1M60 305h1M68 305h2M73 305h1M90 305h2M99 305h1M379 305h1M405 305h1M418 305h1M456 305h1M22 306h1M61 306h1M65 306h3M74 306h1M88 306h2M99 306h1M379 306h1M404 306h1M417 306h1M456 306h1M22 307h1M61 307h1M63 307h2M74 307h1M86 307h2M100 307h1M378 307h1M404 307h1M417 307h1M456 307h1M23 308h1M61 308h2M74 308h1M84 308h2M100 308h1M378 308h1M404 308h1M417 308h1M455 308h1M23 309h1M62 309h1M75 309h1M82 309h2M101 309h1M377 309h1M403 309h1M416 309h1M455 309h1M23 310h1M62 310h1M75 310h1M80 310h2M102 310h1M376 310h1M403 310h1M416 310h1M455 310h1M24 311h1M63 311h1M76 311h1M78 311h2M102 311h1M376 311h1M402 311h2M415 311h1M454 311h1M24 312h1M63 312h1M76 312h2M103 312h1M376 312h1M402 312h1M404 312h2M415 312h1M454 312h1M25 313h1M64 313h1M77 313h1M103 313h1M375 313h1M377 313h2M401 313h1M406 313h2M414 313h1M453 313h1M25 314h1M64 314h1M77 314h1M104 314h1M374 314h1M379 314h2M401 314h1M408 314h2M414 314h1M453 314h1M25 315h1M65 315h1M78 315h1M104 315h1M374 315h1M381 315h2M400 315h1M410 315h2M413 315h1M453 315h1M26 316h1M65 316h1M78 316h1M105 316h1M373 316h1M383 316h2M400 316h1M412 316h2M452 316h1M26 317h1M66 317h1M79 317h1M106 317h1M372 317h1M385 317h1M399 317h1M412 317h1M452 317h1M27 318h1M66 318h1M77 318h3M106 318h1M372 318h1M386 318h2M399 318h1M412 318h1M451 318h1M27 319h1M67 319h1M75 319h2M80 319h1M107 319h1M371 319h1M388 319h2M398 319h1M411 319h1M451 319h1M28 320h1M67 320h1M73 320h2M80 320h1M108 320h1M370 320h1M390 320h2M398 320h1M411 320h1M450 320h1M28 321h1M68 321h1M71 321h2M81 321h1M108 321h1M370 321h1M392 321h2M397 321h1M410 321h1M450 321h1M28 322h1M68 322h3M81 322h1M109 322h1M369 322h1M394 322h2M397 322h1M410 322h1M450 322h1M29 323h1M67 323h3M82 323h1M110 323h1M368 323h1M396 323h1M409 323h1M449 323h1M29 324h1M65 324h2M69 324h1M82 324h1M110 324h1M368 324h1M396 324h1M409 324h1M449 324h1M30 325h1M63 325h2M70 325h1M83 325h1M111 325h1M367 325h1M395 325h1M397 325h1M408 325h1M448 325h1M30 326h1M61 326h2M70 326h1M83 326h1M111 326h1M367 326h1M395 326h1M398 326h2M408 326h1M448 326h1M30 327h1M59 327h2M71 327h1M84 327h1M112 327h1M366 327h1M394 327h1M400 327h2M407 327h1M448 327h1M31 328h1M57 328h2M71 328h1M84 328h1M113 328h1M365 328h1M394 328h1M402 328h2M407 328h1M447 328h1M31 329h1M55 329h2M72 329h1M85 329h1M113 329h1M365 329h1M393 329h1M404 329h3M447 329h1M32 330h1M53 330h2M72 330h1M85 330h1M114 330h1M364 330h1M393 330h1M406 330h1M446 330h1M32 331h1M51 331h2M73 331h1M86 331h1M115 331h1M363 331h1M392 331h1M405 331h1M446 331h1M32 332h1M49 332h2M73 332h1M85 332h1M87 332h1M116 332h1M362 332h1M391 332h1M405 332h1M446 332h1M33 333h1M47 333h2M74 333h1M83 333h2M87 333h1M116 333h1M362 333h1M391 333h1M404 333h1M445 333h1M33 334h1M45 334h2M74 334h1M81 334h2M88 334h1M117 334h1M361 334h1M390 334h1M404 334h1M445 334h1M34 335h1M43 335h2M75 335h1M79 335h2M88 335h1M118 335h1M360 335h1M390 335h1M403 335h1M444 335h1M34 336h1M41 336h2M75 336h1M77 336h2M89 336h1M119 336h1M359 336h1M389 336h1M403 336h1M444 336h1M35 337h1M39 337h2M76 337h1M90 337h1M119 337h1M359 337h1M388 337h1M402 337h1M443 337h1M35 338h1M37 338h2M77 338h1M90 338h1M120 338h1M358 338h1M388 338h1M401 338h1M443 338h1M36 339h1M77 339h1M91 339h1M121 339h1M357 339h1M387 339h2M401 339h1M442 339h1M36 340h1M78 340h1M92 340h1M122 340h1M356 340h1M386 340h1M389 340h2M400 340h1M442 340h1M37 341h1M79 341h1M92 341h1M122 341h1M356 341h1M386 341h1M391 341h1M399 341h1M441 341h1M37 342h1M79 342h1M93 342h1M123 342h1M355 342h1M385 342h1M392 342h2M399 342h1M441 342h1M38 343h1M80 343h1M93 343h1M124 343h1M354 343h1M385 343h1M394 343h1M398 343h1M440 343h1M38 344h1M80 344h1M94 344h1M125 344h1M353 344h1M384 344h1M395 344h2M398 344h1M440 344h1M39 345h1M81 345h1M94 345h2M126 345h1M352 345h1M383 345h1M397 345h2M439 345h1M39 346h1M82 346h1M92 346h2M96 346h1M127 346h1M351 346h1M382 346h1M396 346h1M399 346h2M439 346h1M40 347h1M82 347h1M91 347h1M96 347h1M128 347h1M350 347h1M382 347h1M396 347h1M401 347h1M438 347h1M40 348h1M83 348h1M89 348h2M97 348h1M129 348h1M349 348h1M381 348h1M395 348h1M402 348h2M438 348h1M41 349h1M84 349h1M88 349h1M98 349h1M130 349h1M348 349h1M380 349h1M394 349h1M404 349h1M437 349h1M41 350h1M84 350h1M86 350h2M99 350h1M131 350h1M347 350h1M379 350h1M394 350h1M405 350h1M437 350h1M42 351h1M85 351h1M100 351h1M132 351h1M346 351h1M378 351h2M393 351h1M406 351h2M436 351h1M42 352h1M86 352h1M100 352h1M133 352h1M345 352h1M378 352h1M380 352h1M392 352h1M408 352h1M436 352h1M43 353h1M87 353h1M101 353h1M134 353h1M344 353h1M377 353h1M381 353h1M391 353h1M409 353h2M435 353h1M43 354h1M87 354h1M102 354h1M135 354h1M343 354h1M376 354h1M382 354h1M391 354h1M411 354h1M435 354h1M44 355h1M88 355h1M103 355h1M136 355h1M342 355h1M375 355h1M383 355h2M390 355h1M412 355h2M434 355h1M45 356h1M89 356h1M104 356h1M137 356h2M340 356h2M374 356h1M385 356h1M389 356h1M414 356h1M433 356h1M45 357h1M90 357h1M104 357h1M139 357h1M339 357h1M374 357h1M386 357h1M388 357h1M415 357h2M433 357h1M46 358h1M90 358h1M103 358h1M105 358h1M140 358h1M338 358h1M373 358h1M387 358h2M417 358h1M432 358h1M47 359h1M91 359h1M102 359h1M106 359h1M141 359h2M336 359h2M372 359h1M387 359h1M418 359h2M431 359h1M47 360h1M92 360h1M100 360h2M107 360h1M143 360h1M335 360h1M371 360h1M386 360h1M420 360h1M431 360h1M48 361h1M93 361h1M99 361h1M108 361h1M144 361h1M334 361h1M370 361h1M385 361h1M421 361h1M430 361h1M49 362h1M93 362h1M98 362h1M109 362h1M145 362h2M332 362h2M369 362h1M385 362h1M422 362h2M429 362h1M49 363h1M94 363h1M97 363h1M110 363h1M145 363h1M147 363h1M331 363h1M368 363h2M384 363h1M424 363h1M429 363h1M50 364h1M95 364h2M111 364h1M144 364h1M148 364h1M330 364h1M367 364h1M370 364h1M383 364h1M425 364h2M428 364h1M50 365h1M96 365h1M112 365h1M144 365h1M149 365h2M328 365h2M366 365h1M371 365h1M382 365h1M427 365h2M51 366h1M96 366h1M113 366h1M143 366h1M151 366h1M327 366h1M365 366h1M372 366h1M382 366h1M427 366h1M52 367h1M97 367h1M114 367h1M142 367h1M152 367h2M325 367h2M364 367h1M373 367h1M381 367h1M426 367h1M52 368h1M98 368h1M115 368h1M141 368h1M154 368h1M323 368h2M363 368h1M373 368h1M380 368h1M426 368h1M53 369h1M99 369h1M115 369h2M141 369h1M155 369h2M322 369h1M362 369h1M374 369h1M379 369h1M425 369h1M54 370h1M100 370h1M114 370h1M117 370h1M140 370h1M157 370h2M320 370h2M361 370h1M375 370h1M378 370h1M424 370h1M54 371h1M101 371h1M113 371h1M118 371h1M139 371h1M159 371h1M319 371h1M360 371h1M376 371h2M424 371h1M55 372h1M102 372h1M111 372h2M119 372h1M138 372h1M160 372h2M317 372h2M359 372h1M376 372h1M423 372h1M56 373h1M103 373h1M110 373h1M120 373h1M138 373h1M162 373h1M358 373h1M375 373h1M422 373h1M57 374h1M104 374h1M109 374h1M121 374h2M137 374h1M163 374h2M314 374h2M317 374h1M356 374h2M374 374h1M421 374h1M57 375h1M105 375h1M108 375h1M123 375h1M136 375h1M165 375h2M312 375h2M318 375h1M355 375h1M358 375h1M373 375h1M421 375h1M58 376h1M106 376h2M124 376h1M136 376h1M167 376h2M310 376h2M318 376h1M354 376h1M359 376h1M372 376h1M420 376h1M59 377h1M107 377h1M125 377h1M135 377h1M169 377h1M309 377h1M319 377h1M353 377h1M360 377h1M371 377h1M419 377h1M60 378h1M108 378h1M126 378h2M134 378h1M170 378h2M307 378h2M319 378h1M351 378h2M361 378h1M370 378h1M418 378h1M61 379h1M109 379h1M127 379h2M133 379h1M172 379h2M305 379h2M320 379h1M350 379h1M361 379h1M369 379h1M417 379h1M61 380h1M110 380h1M126 380h1M129 380h1M133 380h1M174 380h2M303 380h2M320 380h1M349 380h1M362 380h1M368 380h1M417 380h1M62 381h1M111 381h1M125 381h1M130 381h1M132 381h1M176 381h2M301 381h2M321 381h1M348 381h1M363 381h1M367 381h1M416 381h1M63 382h1M112 382h1M124 382h1M131 382h2M178 382h3M298 382h3M322 382h1M346 382h2M364 382h3M415 382h1M64 383h1M113 383h2M123 383h1M133 383h1M181 383h3M295 383h3M322 383h1M345 383h1M364 383h1M414 383h1M64 384h1M115 384h1M123 384h1M134 384h1M184 384h3M292 384h3M323 384h1M344 384h2M363 384h1M414 384h1M65 385h1M116 385h1M122 385h1M135 385h2M187 385h3M289 385h3M323 385h1M342 385h2M346 385h1M361 385h2M413 385h1M66 386h1M117 386h2M121 386h1M137 386h1M190 386h3M286 386h3M324 386h1M340 386h2M346 386h1M360 386h1M412 386h1M67 387h1M119 387h2M138 387h2M193 387h3M283 387h3M325 387h1M339 387h1M347 387h1M359 387h1M411 387h1M68 388h1M120 388h1M139 388h3M196 388h3M279 388h4M325 388h1M337 388h2M348 388h1M357 388h2M410 388h1M68 389h1M121 389h2M138 389h1M142 389h1M199 389h4M276 389h3M326 389h1M336 389h1M348 389h1M356 389h1M410 389h1M69 390h1M123 390h1M138 390h1M143 390h2M203 390h3M273 390h3M326 390h1M334 390h2M349 390h1M355 390h1M409 390h1M70 391h1M124 391h1M137 391h1M145 391h1M206 391h5M267 391h6M327 391h1M332 391h2M350 391h1M353 391h2M408 391h1M71 392h1M125 392h2M136 392h1M146 392h2M211 392h8M259 392h8M327 392h1M331 392h1M350 392h1M352 392h1M407 392h1M72 393h1M127 393h1M136 393h1M148 393h2M219 393h12M247 393h12M328 393h3M332 393h1M351 393h1M406 393h1M73 394h1M128 394h2M135 394h1M150 394h1M229 394h1M231 394h16M327 394h2M333 394h1M349 394h2M405 394h1M74 395h1M130 395h1M134 395h1M151 395h2M229 395h1M325 395h2M333 395h1M348 395h1M404 395h1M75 396h1M131 396h2M134 396h1M153 396h2M229 396h1M323 396h2M334 396h1M346 396h2M403 396h1M76 397h1M133 397h1M153 397h1M155 397h2M229 397h1M321 397h2M334 397h1M345 397h1M402 397h1M77 398h1M133 398h3M152 398h1M157 398h2M229 398h1M319 398h2M335 398h1M343 398h2M401 398h1M78 399h1M132 399h1M136 399h2M152 399h1M159 399h2M229 399h1M317 399h2M335 399h1M341 399h2M400 399h1M79 400h1M132 400h1M138 400h1M151 400h1M161 400h2M228 400h1M315 400h2M318 400h1M336 400h1M340 400h1M399 400h1M80 401h1M131 401h1M139 401h2M151 401h1M163 401h2M228 401h1M313 401h2M319 401h1M336 401h1M338 401h2M398 401h1M81 402h1M130 402h1M141 402h1M150 402h1M165 402h3M228 402h1M311 402h2M319 402h1M337 402h1M397 402h1M82 403h1M130 403h1M142 403h2M150 403h1M167 403h3M228 403h1M309 403h2M320 403h1M335 403h2M396 403h1M83 404h1M129 404h1M144 404h1M149 404h1M166 404h1M170 404h3M228 404h1M306 404h3M320 404h1M333 404h2M395 404h1M84 405h1M128 405h1M145 405h2M149 405h1M166 405h1M173 405h2M228 405h1M303 405h3M321 405h1M331 405h2M394 405h1M85 406h1M127 406h1M147 406h2M165 406h1M175 406h3M228 406h1M301 406h2M321 406h1M329 406h2M393 406h1M86 407h1M127 407h1M149 407h2M165 407h1M178 407h3M228 407h1M298 407h3M304 407h1M322 407h1M327 407h2M392 407h1M87 408h1M126 408h1M151 408h2M164 408h1M181 408h2M228 408h1M296 408h2M304 408h1M322 408h1M325 408h2M391 408h1M88 409h1M125 409h1M153 409h2M164 409h1M181 409h1M183 409h3M228 409h1M293 409h3M305 409h1M323 409h2M390 409h1M89 410h2M125 410h1M155 410h2M163 410h1M181 410h1M186 410h4M228 410h1M289 410h4M305 410h1M321 410h3M388 410h2M91 411h1M124 411h1M157 411h2M163 411h1M180 411h1M190 411h3M228 411h1M285 411h4M306 411h1M319 411h2M323 411h1M387 411h1M92 412h1M123 412h1M159 412h2M162 412h1M180 412h1M193 412h4M227 412h1M282 412h3M289 412h1M306 412h1M317 412h2M324 412h1M386 412h1M93 413h1M123 413h1M161 413h3M180 413h1M197 413h4M227 413h1M278 413h4M289 413h1M306 413h1M315 413h2M324 413h1M385 413h1M94 414h2M122 414h1M164 414h2M179 414h1M197 414h1M201 414h5M227 414h1M273 414h5M290 414h1M307 414h1M313 414h2M325 414h1M383 414h2M96 415h1M121 415h1M166 415h2M179 415h1M197 415h1M206 415h6M227 415h1M267 415h6M274 415h1M290 415h1M307 415h1M311 415h2M325 415h1M382 415h1M97 416h1M121 416h1M168 416h2M179 416h1M196 416h1M212 416h6M227 416h1M261 416h6M274 416h1M290 416h1M308 416h3M326 416h1M381 416h1M98 417h2M120 417h1M170 417h3M179 417h1M196 417h1M212 417h1M218 417h12M248 417h13M274 417h1M291 417h1M306 417h3M326 417h1M379 417h2M100 418h1M119 418h1M173 418h2M178 418h1M196 418h1M212 418h1M228 418h1M230 418h18M258 418h1M275 418h1M291 418h1M304 418h2M327 418h1M378 418h1M101 419h1M119 419h1M175 419h2M178 419h1M195 419h1M212 419h1M228 419h1M242 419h1M258 419h1M275 419h1M291 419h1M302 419h2M327 419h1M377 419h1M102 420h1M118 420h1M177 420h2M195 420h1M211 420h1M228 420h1M242 420h1M258 420h1M275 420h1M291 420h1M300 420h2M328 420h1M376 420h1M103 421h2M117 421h1M179 421h3M195 421h1M211 421h1M228 421h1M242 421h1M258 421h1M275 421h1M292 421h1M296 421h4M328 421h1M374 421h2M105 422h1M116 422h1M182 422h4M195 422h1M211 422h1M228 422h1M242 422h1M258 422h1M275 422h1M292 422h4M329 422h1M373 422h1M106 423h1M116 423h1M186 423h4M194 423h1M211 423h1M228 423h1M242 423h1M259 423h1M275 423h1M288 423h4M329 423h1M372 423h1M107 424h2M115 424h1M190 424h5M211 424h1M227 424h1M243 424h1M259 424h1M276 424h1M284 424h4M330 424h1M370 424h2M109 425h1M114 425h1M194 425h4M210 425h1M227 425h1M243 425h1M259 425h1M276 425h1M280 425h4M330 425h1M369 425h1M110 426h2M114 426h1M198 426h6M210 426h1M227 426h1M243 426h1M259 426h1M275 426h5M331 426h1M367 426h2M112 427h2M204 427h7M227 427h1M243 427h1M259 427h1M269 427h6M331 427h1M366 427h1M113 428h2M210 428h6M227 428h1M243 428h1M259 428h1M263 428h6M332 428h1M364 428h2M115 429h1M216 429h13M243 429h1M249 429h14M332 429h1M362 429h2M116 430h2M227 430h1M229 430h20M333 430h1M361 430h1M118 431h2M227 431h1M333 431h1M359 431h2M120 432h1M227 432h1M334 432h1M358 432h1M121 433h2M227 433h1M334 433h1M356 433h2M123 434h1M227 434h1M335 434h1M355 434h1M124 435h2M227 435h1M335 435h1M353 435h2M126 436h2M227 436h1M336 436h1M351 436h2M128 437h2M227 437h1M336 437h1M349 437h2M130 438h2M227 438h1M337 438h1M347 438h2M132 439h2M226 439h1M337 439h1M345 439h2M134 440h2M226 440h1M338 440h1M343 440h2M136 441h2M226 441h1M338 441h1M341 441h2M138 442h2M226 442h1M339 442h2M140 443h2M226 443h1M337 443h2M142 444h2M226 444h1M335 444h2M144 445h2M226 445h1M333 445h2M146 446h3M226 446h1M330 446h3M149 447h2M226 447h1M328 447h2M151 448h3M226 448h1M325 448h3M154 449h2M226 449h1M323 449h2M156 450h2M226 450h1M320 450h3M158 451h3M226 451h1M318 451h2M161 452h2M226 452h1M316 452h2M163 453h3M226 453h1M313 453h3M166 454h2M226 454h1M311 454h2M168 455h3M226 455h1M308 455h3M171 456h4M226 456h1M304 456h4M175 457h4M225 457h1M300 457h4M179 458h4M225 458h1M296 458h4M183 459h4M225 459h1M292 459h4M187 460h4M225 460h1M288 460h4M191 461h4M225 461h1M283 461h5M195 462h6M225 462h1M277 462h6M201 463h6M225 463h1M271 463h6M207 464h6M225 464h1M265 464h6M213 465h15M251 465h14M228 466h23"/>
<path stroke="#808080" d="M229 49h1M232 49h1M239 49h1M241 49h1M244 49h1M248 49h1M216 50h1M222 50h1M225 50h1M229 50h1M232 50h1M239 50h1M241 50h1M244 50h1M248 50h1M254 50h1M258 50h1M261 50h1M212 51h1M216 51h1M222 51h1M225 51h1M229 51h1M232 51h1M239 51h1M241 51h1M244 51h1M248 51h1M254 51h1M258 51h1M261 51h1M264 51h1M206 52h1M209 52h1M212 52h1M216 52h1M222 52h1M225 52h1M229 52h1M232 52h1M239 52h1M241 52h1M244 52h1M248 52h1M254 52h1M258 52h1M261 52h1M264 52h1M271 52h1M274 52h1M199 53h1M206 53h1M209 53h1M212 53h1M216 53h1M222 53h1M225 53h1M229 53h1M232 53h1M239 53h1M241 53h1M244 53h1M248 53h1M254 53h1M258 53h1M261 53h1M264 53h1M271 53h1M274 53h1M277 53h1M196 54h1M199 54h1M206 54h1M210 54h1M213 54h1M216 54h1M222 54h1M225 54h1M229 54h1M233 54h1M239 54h1M241 54h1M244 54h1M247 54h1M254 54h1M258 54h1M261 54h1M264 54h1M270 54h1M274 54h1M277 54h1M281 54h1M193 55h1M196 55h1M199 55h1M207 55h1M210 55h1M213 55h1M216 55h1M223 55h1M226 55h1M229 55h1M233 55h1M239 55h1M241 55h1M244 55h1M247 55h1M254 55h1M257 55h1M260 55h1M264 55h1M270 55h1M273 55h1M277 55h1M280 55h1M287 55h1M189 56h1M193 56h1M196 56h1M200 56h1M207 56h1M210 56h1M213 56h1M217 56h1M223 56h1M226 56h1M229 56h1M233 56h1M239 56h1M241 56h1M244 56h1M247 56h1M254 56h1M257 56h1M260 56h1M263 56h1M270 56h1M273 56h1M276 56h1M280 56h1M287 56h1M290 56h1M183 57h1M190 57h1M194 57h1M197 57h1M200 57h1M207 57h1M210 57h1M213 57h1M217 57h1M223 57h1M226 57h1M229 57h1M233 57h1M239 57h1M241 57h1M244 57h1M247 57h1M254 57h1M257 57h1M260 57h1M263 57h1M270 57h1M273 57h1M276 57h1M280 57h1M287 57h1M290 57h1M294 57h1M180 58h1M183 58h1M190 58h1M194 58h1M197 58h1M200 58h1M207 58h1M210 58h1M213 58h1M217 58h1M223 58h1M226 58h1M229 58h1M233 58h1M239 58h1M241 58h1M244 58h1M247 58h1M254 58h1M257 58h1M260 58h1M263 58h1M270 58h1M273 58h1M276 58h1M280 58h1M286 58h1M290 58h1M294 58h1M297 58h1M177 59h1M180 59h1M184 59h1M190 59h1M194 59h1M197 59h1M200 59h1M207 59h1M210 59h1M214 59h1M217 59h1M223 59h1M226 59h1M229 59h1M233 59h1M239 59h1M241 59h1M244 59h1M247 59h1M254 59h1M257 59h1M260 59h1M263 59h1M270 59h1M273 59h1M276 59h1M279 59h1M286 59h1M289 59h1M293 59h1M297 59h1M177 60h1M181 60h1M184 60h1M190 60h1M194 60h1M197 60h1M200 60h1M208 60h1M211 60h1M214 60h1M217 60h1M223 60h1M226 60h1M254 60h1M257 60h1M260 60h1M263 60h1M269 60h1M272 60h1M276 60h1M279 60h1M286 60h1M289 60h1M293 60h1M296 60h1M303 60h1M174 61h1M178 61h1M181 61h1M184 61h1M191 61h1M194 61h1M197 61h1M201 61h1M208 61h1M211 61h1M214 61h1M217 61h1M263 61h1M269 61h1M272 61h1M275 61h1M279 61h1M286 61h1M289 61h1M293 61h1M296 61h1M303 61h1M175 62h1M178 62h1M181 62h1M185 62h1M191 62h1M194 62h1M198 62h1M201 62h1M208 62h1M211 62h1M269 62h1M272 62h1M275 62h1M279 62h1M286 62h1M289 62h1M292 62h1M296 62h1M302 62h1M306 62h1M175 63h1M178 63h1M182 63h1M185 63h1M191 63h1M195 63h1M198 63h1M201 63h1M275 63h1M278 63h1M285 63h1M289 63h1M292 63h1M295 63h1M302 63h1M305 63h1M309 63h1M167 64h1M175 64h1M179 64h1M182 64h1M185 64h1M191 64h1M195 64h1M198 64h1M278 64h1M285 64h1M288 64h1M292 64h1M295 64h1M302 64h1M305 64h1M308 64h1M312 64h1M164 65h1M168 65h1M176 65h1M179 65h1M182 65h1M185 65h1M192 65h1M195 65h1M285 65h1M288 65h1M292 65h1M295 65h1M301 65h1M304 65h1M308 65h1M311 65h1M162 66h1M165 66h1M168 66h1M176 66h1M179 66h1M182 66h1M186 66h1M192 66h1M288 66h1M291 66h1M295 66h1M301 66h1M304 66h1M307 66h1M311 66h1M319 66h1M162 67h1M165 67h1M169 67h1M176 67h1M179 67h1M183 67h1M186 67h1M291 67h1M294 67h1M301 67h1M304 67h1M307 67h1M310 67h1M318 67h1M159 68h1M163 68h1M166 68h1M169 68h1M176 68h1M180 68h1M183 68h1M294 68h1M301 68h1M303 68h1M307 68h1M310 68h1M318 68h1M159 69h1M163 69h1M166 69h1M169 69h1M177 69h1M180 69h1M300 69h1M303 69h1M306 69h1M310 69h1M317 69h1M321 69h1M325 69h1M160 70h1M164 70h1M166 70h1M170 70h1M177 70h1M300 70h1M302 70h1M306 70h1M309 70h1M317 70h1M321 70h1M324 70h1M153 71h1M160 71h1M164 71h1M167 71h1M170 71h1M302 71h1M305 71h1M309 71h1M316 71h1M320 71h1M324 71h1M150 72h1M153 72h1M161 72h1M165 72h1M167 72h1M171 72h1M305 72h1M308 72h1M316 72h1M320 72h1M323 72h1M327 72h1M150 73h1M154 73h1M161 73h1M165 73h1M168 73h1M171 73h1M308 73h1M315 73h1M319 73h1M323 73h1M327 73h1M143 74h1M147 74h1M151 74h1M154 74h1M162 74h1M166 74h1M168 74h1M315 74h1M319 74h1M322 74h1M326 74h1M144 75h1M147 75h1M151 75h1M155 75h1M162 75h1M166 75h1M314 75h1M318 75h1M322 75h1M326 75h1M332 75h1M144 76h1M148 76h1M152 76h1M155 76h1M163 76h1M314 76h1M318 76h1M321 76h1M325 76h1M332 76h1M335 76h1M145 77h1M148 77h1M152 77h1M156 77h1M317 77h1M321 77h1M325 77h1M331 77h1M335 77h1M145 78h1M149 78h1M153 78h1M156 78h1M320 78h1M324 78h1M331 78h1M334 78h1M338 78h1M139 79h1M146 79h1M149 79h1M153 79h1M157 79h1M320 79h1M324 79h1M330 79h1M334 79h1M338 79h1M139 80h1M147 80h1M150 80h1M154 80h1M323 80h1M330 80h1M333 80h1M337 80h1M341 80h1M136 81h1M140 81h1M147 81h1M150 81h1M154 81h1M329 81h1M333 81h1M336 81h1M341 81h1M136 82h1M140 82h1M148 82h1M151 82h1M329 82h1M332 82h1M336 82h1M340 82h1M129 83h1M133 83h1M137 83h1M141 83h1M148 83h1M328 83h1M332 83h1M335 83h1M339 83h1M347 83h1M130 84h1M134 84h1M138 84h1M141 84h1M149 84h1M331 84h1M334 84h1M339 84h1M346 84h1M131 85h1M134 85h1M138 85h1M142 85h1M331 85h1M334 85h1M338 85h1M345 85h1M350 85h1M131 86h1M135 86h1M139 86h1M142 86h1M333 86h1M337 86h1M345 86h1M349 86h1M132 87h1M136 87h1M140 87h1M143 87h1M337 87h1M344 87h1M348 87h1M125 88h1M133 88h1M137 88h1M140 88h1M336 88h1M343 88h1M348 88h1M352 88h1M125 89h1M134 89h1M137 89h1M141 89h1M342 89h1M347 89h1M351 89h1M355 89h1M122 90h1M126 90h1M134 90h1M138 90h1M342 90h1M346 90h1M350 90h1M354 90h1M123 91h1M127 91h1M135 91h1M341 91h1M345 91h1M349 91h1M353 91h1M119 92h1M123 92h1M127 92h1M136 92h1M345 92h1M349 92h1M353 92h1M120 93h1M124 93h1M128 93h1M344 93h1M348 93h1M352 93h1M116 94h1M121 94h1M125 94h1M129 94h1M347 94h1M351 94h1M360 94h1M117 95h1M122 95h1M126 95h1M129 95h1M346 95h1M350 95h1M359 95h1M363 95h1M118 96h1M123 96h1M126 96h1M130 96h1M350 96h1M358 96h1M362 96h1M119 97h1M123 97h1M127 97h1M349 97h1M357 97h1M361 97h1M366 97h1M111 98h1M120 98h1M124 98h1M128 98h1M357 98h1M360 98h1M365 98h1M112 99h1M120 99h1M125 99h1M356 99h1M359 99h1M364 99h1M368 99h1M109 100h1M113 100h1M121 100h1M355 100h1M359 100h1M363 100h1M367 100h1M110 101h1M114 101h1M122 101h1M354 101h1M358 101h1M362 101h1M366 101h1M111 102h1M115 102h1M123 102h1M357 102h1M362 102h1M365 102h1M106 103h1M112 103h1M115 103h1M356 103h1M361 103h1M364 103h1M107 104h1M113 104h1M116 104h1M360 104h1M364 104h1M373 104h1M104 105h1M108 105h1M113 105h1M117 105h1M162 105h1M359 105h1M363 105h1M372 105h1M105 106h1M109 106h1M114 106h1M118 106h1M362 106h1M371 106h1M375 106h1M106 107h1M110 107h2M115 107h1M163 107h1M361 107h1M370 107h1M374 107h1M107 108h1M112 108h1M116 108h1M369 108h1M373 108h1M108 109h2M113 109h1M164 109h1M369 109h1M372 109h1M378 109h1M99 110h1M110 110h1M114 110h1M368 110h1M371 110h1M377 110h1M100 111h1M111 111h1M165 111h1M367 111h1M371 111h1M376 111h1M380 111h1M97 112h1M101 112h1M112 112h1M366 112h1M370 112h1M374 112h2M379 112h1M98 113h1M102 113h1M167 113h1M369 113h1M373 113h1M378 113h1M99 114h1M103 114h2M368 114h1M372 114h1M376 114h2M95 115h1M100 115h1M105 115h1M168 115h1M371 115h1M375 115h1M96 116h1M101 116h2M106 116h1M370 116h1M374 116h1M384 116h1M93 117h1M97 117h1M103 117h1M107 117h1M169 117h1M331 117h1M373 117h1M383 117h1M94 118h1M98 118h1M104 118h1M372 118h1M382 118h1M95 119h1M99 119h2M105 119h1M170 119h1M330 119h1M380 119h2M386 119h1M96 120h1M101 120h1M379 120h1M385 120h1M97 121h2M102 121h1M171 121h1M328 121h1M378 121h1M384 121h1M99 122h1M103 122h1M377 122h1M382 122h2M388 122h1M89 123h1M100 123h1M172 123h1M327 123h1M376 123h1M381 123h1M386 123h2M90 124h1M101 124h1M380 124h1M385 124h1M87 125h1M91 125h2M173 125h1M325 125h1M379 125h1M384 125h1M389 125h2M88 126h1M93 126h1M382 126h2M388 126h1M89 127h1M94 127h1M175 127h1M324 127h1M381 127h1M386 127h2M85 128h1M90 128h1M95 128h2M380 128h1M385 128h1M86 129h1M91 129h2M97 129h1M176 129h1M322 129h1M383 129h2M395 129h1M87 130h2M93 130h1M382 130h1M394 130h1M83 131h1M89 131h1M94 131h1M177 131h1M321 131h1M392 131h2M84 132h1M90 132h1M95 132h1M391 132h1M85 133h2M91 133h2M178 133h1M319 133h1M390 133h1M394 133h2M87 134h1M93 134h1M388 134h2M393 134h1M88 135h1M179 135h1M318 135h1M387 135h1M392 135h1M89 136h2M386 136h1M390 136h2M396 136h2M80 137h2M91 137h1M180 137h1M316 137h1M389 137h1M395 137h1M82 138h1M388 138h1M393 138h2M83 139h2M182 139h1M315 139h1M392 139h1M398 139h2M78 140h2M85 140h1M390 140h2M396 140h2M80 141h1M86 141h2M183 141h1M313 141h1M389 141h1M394 141h2M81 142h2M88 142h1M392 142h2M76 143h2M83 143h1M184 143h1M312 143h1M391 143h1M404 143h1M78 144h2M84 144h2M402 144h2M74 145h1M80 145h2M86 145h1M185 145h1M310 145h1M400 145h2M75 146h2M82 146h2M399 146h1M77 147h2M84 147h2M186 147h1M309 147h1M397 147h2M403 147h2M79 148h2M395 148h2M401 148h2M81 149h2M187 149h1M307 149h1M394 149h1M399 149h2M406 149h1M83 150h1M397 150h2M404 150h2M72 151h2M188 151h1M306 151h1M396 151h1M402 151h2M74 152h2M400 152h2M76 153h2M190 153h1M304 153h1M398 153h2M406 153h2M70 154h2M78 154h2M397 154h1M404 154h2M72 155h2M80 155h1M191 155h1M303 155h1M402 155h2M74 156h2M400 156h2M69 157h2M76 157h2M192 157h1M301 157h1M399 157h1M71 158h2M78 158h2M73 159h2M193 159h1M299 159h1M409 159h2M67 160h2M75 160h2M407 160h2M69 161h2M77 161h1M194 161h1M298 161h1M405 161h2M412 161h1M71 162h2M403 162h2M410 162h2M73 163h2M195 163h1M296 163h1M402 163h1M408 163h2M75 164h2M406 164h2M413 164h1M196 165h1M295 165h1M404 165h2M411 165h2M64 166h1M103 166h1M403 166h1M408 166h3M65 167h2M105 167h1M198 167h1M293 167h1M406 167h2M414 167h1M67 168h3M107 168h1M404 168h2M412 168h2M63 169h1M70 169h2M109 169h1M199 169h1M292 169h1M409 169h3M64 170h2M72 170h2M111 170h1M407 170h2M66 171h3M113 171h1M200 171h1M290 171h1M405 171h2M62 172h1M69 172h2M115 172h1M63 173h2M71 173h2M201 173h1M289 173h1M65 174h3M117 174h1M417 174h1M60 175h2M68 175h2M119 175h1M202 175h1M287 175h1M413 175h4M62 176h3M70 176h2M121 176h1M379 176h1M410 176h3M65 177h4M123 177h1M203 177h1M286 177h1M408 177h2M418 177h2M69 178h2M125 178h1M375 178h1M414 178h4M127 179h1M205 179h1M284 179h1M373 179h1M411 179h3M129 180h1M409 180h2M419 180h2M58 181h2M131 181h1M206 181h1M283 181h1M369 181h1M415 181h4M60 182h3M133 182h1M367 182h1M412 182h3M63 183h4M135 183h1M207 183h1M281 183h1M365 183h1M410 183h2M420 183h2M57 184h2M67 184h2M137 184h1M361 184h1M363 184h1M416 184h4M59 185h3M139 185h1M208 185h1M280 185h1M413 185h3M62 186h4M141 186h1M357 186h1M411 186h2M66 187h2M143 187h1M209 187h1M278 187h1M355 187h1M56 188h3M353 188h1M59 189h5M145 189h1M210 189h1M277 189h1M351 189h1M422 189h1M64 190h3M147 190h1M349 190h1M418 190h4M55 191h3M149 191h1M211 191h1M275 191h1M347 191h1M414 191h4M58 192h5M151 192h1M345 192h1M412 192h2M63 193h3M153 193h1M213 193h1M274 193h1M341 193h1M343 193h1M422 193h2M155 194h1M339 194h1M416 194h6M157 195h1M214 195h1M272 195h1M337 195h1M413 195h3M159 196h1M335 196h1M422 196h3M54 197h1M161 197h1M215 197h1M271 197h1M333 197h1M417 197h5M55 198h4M163 198h1M331 198h1M414 198h3M59 199h4M165 199h1M216 199h1M269 199h1M329 199h1M423 199h3M63 200h2M167 200h1M327 200h1M418 200h5M53 201h3M169 201h1M217 201h1M268 201h1M323 201h1M325 201h1M415 201h3M56 202h5M321 202h1M61 203h3M171 203h1M218 203h1M266 203h1M319 203h1M52 204h3M173 204h1M317 204h1M55 205h5M175 205h1M219 205h1M265 205h1M315 205h1M60 206h3M177 206h1M313 206h1M424 206h3M52 207h2M179 207h1M221 207h1M263 207h1M311 207h1M419 207h5M54 208h6M181 208h1M309 208h1M416 208h3M60 209h3M183 209h1M222 209h1M262 209h1M307 209h1M425 209h2M185 210h1M303 210h1M305 210h1M419 210h6M187 211h1M223 211h1M260 211h1M301 211h1M416 211h3M189 212h1M299 212h1M425 212h3M191 213h1M224 213h1M259 213h1M297 213h1M420 213h5M51 214h5M193 214h1M295 214h1M417 214h3M56 215h6M195 215h1M225 215h1M257 215h1M293 215h1M197 216h1M291 216h1M423 216h6M50 217h5M226 217h1M256 217h1M289 217h1M417 217h6M55 218h6M199 218h1M285 218h1M287 218h1M201 219h1M228 219h1M254 219h1M283 219h1M50 220h5M203 220h1M281 220h1M55 221h6M205 221h1M229 221h1M253 221h1M279 221h1M207 222h1M277 222h1M424 222h5M209 223h1M230 223h1M251 223h1M275 223h1M418 223h6M50 224h11M211 224h1M273 224h1M213 225h1M231 225h1M250 225h1M271 225h1M424 225h5M215 226h1M267 226h1M269 226h1M418 226h6M217 227h1M232 227h1M248 227h1M265 227h1M219 228h1M263 228h1M221 229h1M233 229h1M247 229h1M261 229h1M419 229h11M49 230h5M223 230h1M259 230h1M54 231h6M225 231h1M234 231h1M245 231h1M257 231h1M255 232h1M424 232h6M227 233h1M236 233h1M244 233h1M253 233h1M419 233h5M49 234h11M229 234h1M251 234h1M231 235h1M237 235h1M242 235h1M247 235h1M249 235h1M233 236h1M245 236h1M49 237h11M235 237h1M238 237h1M241 237h1M243 237h1M237 238h1M241 238h1M49 239h11M239 239h1M419 239h11M237 240h1M241 240h1M235 241h1M237 241h1M240 241h1M243 241h1M419 241h11M233 242h1M245 242h1M229 243h1M231 243h1M236 243h1M241 243h1M247 243h1M227 244h1M249 244h1M419 244h11M54 245h6M225 245h1M234 245h1M242 245h1M251 245h1M49 246h5M223 246h1M221 247h1M233 247h1M244 247h1M253 247h1M419 247h5M219 248h1M255 248h1M424 248h6M50 249h10M217 249h1M231 249h1M245 249h1M257 249h1M215 250h1M259 250h1M213 251h1M230 251h1M246 251h1M261 251h1M55 252h6M209 252h1M211 252h1M263 252h1M50 253h5M207 253h1M228 253h1M247 253h1M265 253h1M205 254h1M267 254h1M418 254h11M55 255h6M203 255h1M227 255h1M248 255h1M269 255h1M50 256h5M201 256h1M271 256h1M199 257h1M225 257h1M249 257h1M273 257h1M418 257h5M197 258h1M275 258h1M423 258h6M195 259h1M224 259h1M250 259h1M277 259h1M191 260h1M193 260h1M279 260h1M418 260h5M56 261h6M189 261h1M222 261h1M252 261h1M423 261h6M50 262h6M187 262h1M281 262h1M185 263h1M221 263h1M253 263h1M283 263h1M417 263h6M59 264h3M183 264h1M285 264h1M423 264h5M54 265h5M181 265h1M219 265h1M254 265h1M287 265h1M51 266h3M179 266h1M289 266h1M60 267h3M177 267h1M218 267h1M255 267h1M291 267h1M54 268h6M173 268h1M175 268h1M293 268h1M52 269h2M171 269h1M216 269h1M256 269h1M295 269h1M416 269h3M60 270h3M169 270h1M297 270h1M419 270h6M55 271h5M167 271h1M215 271h1M257 271h1M299 271h1M425 271h2M52 272h3M165 272h1M301 272h1M416 272h3M163 273h1M213 273h1M259 273h1M303 273h1M419 273h5M161 274h1M305 274h1M424 274h3M159 275h1M212 275h1M260 275h1M415 275h3M157 276h1M307 276h1M418 276h5M61 277h3M153 277h1M155 277h1M210 277h1M261 277h1M309 277h1M423 277h3M56 278h5M151 278h1M311 278h1M414 278h2M53 279h3M149 279h1M209 279h1M262 279h1M313 279h1M416 279h4M62 280h3M147 280h1M315 280h1M420 280h4M57 281h5M145 281h1M207 281h1M263 281h1M317 281h1M424 281h1M54 282h3M143 282h1M319 282h1M63 283h3M141 283h1M206 283h1M264 283h1M321 283h1M57 284h6M139 284h1M323 284h1M55 285h2M135 285h1M137 285h1M204 285h1M265 285h1M325 285h1M413 285h3M65 286h2M133 286h1M327 286h1M416 286h5M61 287h4M131 287h1M203 287h1M267 287h1M329 287h1M421 287h3M57 288h4M129 288h1M331 288h1M412 288h3M56 289h1M127 289h1M201 289h1M268 289h1M333 289h1M415 289h5M125 290h1M420 290h3M123 291h1M200 291h1M269 291h1M335 291h1M411 291h2M66 292h2M121 292h1M337 292h1M413 292h3M62 293h4M119 293h1M198 293h1M270 293h1M339 293h1M416 293h4M59 294h3M115 294h1M117 294h1M341 294h1M410 294h2M420 294h2M57 295h2M67 295h2M113 295h1M197 295h1M271 295h1M343 295h1M412 295h3M63 296h4M111 296h1M415 296h4M60 297h3M109 297h1M195 297h1M272 297h1M347 297h1M419 297h2M58 298h2M68 298h2M107 298h1M64 299h4M105 299h1M194 299h1M273 299h1M61 300h3M103 300h1M408 300h2M59 301h2M69 301h2M101 301h1M192 301h1M275 301h1M410 301h3M65 302h4M99 302h1M407 302h2M413 302h4M62 303h3M191 303h1M276 303h1M409 303h2M417 303h2M61 304h1M361 304h1M411 304h3M189 305h1M277 305h1M406 305h2M414 305h2M363 306h1M408 306h2M416 306h1M72 307h2M188 307h1M278 307h1M410 307h3M70 308h2M367 308h1M405 308h2M413 308h2M67 309h3M186 309h1M279 309h1M369 309h1M407 309h2M415 309h1M65 310h2M73 310h2M371 310h1M409 310h3M64 311h1M71 311h2M185 311h1M280 311h1M373 311h1M412 311h2M68 312h3M74 312h2M375 312h1M414 312h1M66 313h2M72 313h2M183 313h1M282 313h1M65 314h1M70 314h2M402 314h1M68 315h2M76 315h1M182 315h1M283 315h1M403 315h2M66 316h2M74 316h2M405 316h2M65 317h1M72 317h2M180 317h1M284 317h1M401 317h1M407 317h2M70 318h2M402 318h2M409 318h2M68 319h2M179 319h1M285 319h1M404 319h2M412 319h1M399 320h1M406 320h2M79 321h1M177 321h1M286 321h1M400 321h2M408 321h2M77 322h2M402 322h2M75 323h2M175 323h1M287 323h1M398 323h1M404 323h2M73 324h2M80 324h2M399 324h2M406 324h2M71 325h2M78 325h2M174 325h1M288 325h1M401 325h2M409 325h1M76 326h2M403 326h2M74 327h2M82 327h1M172 327h1M290 327h1M405 327h2M72 328h2M80 328h2M395 328h1M71 329h1M78 329h2M84 329h1M171 329h1M291 329h1M396 329h2M76 330h2M82 330h2M398 330h2M74 331h2M80 331h2M169 331h1M292 331h1M393 331h1M400 331h2M79 332h1M394 332h2M402 332h2M77 333h2M168 333h1M293 333h1M392 333h1M396 333h2M75 334h2M393 334h2M398 334h2M74 335h1M87 335h1M166 335h1M294 335h1M395 335h1M400 335h2M85 336h2M390 336h1M396 336h2M402 336h1M83 337h2M89 337h1M165 337h1M295 337h1M391 337h2M398 337h1M81 338h2M87 338h2M393 338h1M399 338h2M79 339h2M86 339h1M163 339h1M296 339h1M394 339h2M84 340h2M90 340h1M396 340h1M83 341h1M88 341h2M162 341h1M298 341h1M387 341h1M397 341h2M81 342h2M87 342h1M92 342h1M388 342h1M86 343h1M91 343h1M160 343h1M299 343h1M389 343h2M84 344h2M89 344h2M385 344h1M391 344h1M83 345h1M88 345h1M159 345h1M300 345h1M386 345h1M392 345h1M87 346h1M383 346h1M387 346h2M393 346h2M85 347h2M157 347h1M301 347h1M384 347h1M389 347h1M395 347h1M84 348h1M96 348h1M385 348h1M390 348h1M83 349h1M94 349h2M156 349h1M302 349h1M381 349h1M386 349h1M391 349h2M93 350h1M98 350h1M382 350h1M387 350h2M393 350h1M91 351h2M97 351h1M154 351h1M303 351h1M383 351h2M389 351h1M90 352h1M95 352h2M385 352h1M390 352h1M88 353h2M94 353h1M99 353h1M153 353h1M305 353h1M386 353h1M93 354h1M98 354h1M377 354h1M387 354h2M91 355h2M96 355h2M102 355h1M151 355h1M306 355h1M378 355h1M389 355h1M90 356h1M95 356h1M101 356h1M375 356h1M379 356h1M89 357h1M94 357h1M100 357h1M150 357h1M307 357h1M376 357h1M380 357h1M93 358h1M98 358h2M377 358h1M381 358h2M92 359h1M97 359h1M148 359h1M308 359h1M373 359h1M378 359h1M383 359h1M96 360h1M106 360h1M374 360h1M379 360h2M384 360h1M95 361h1M105 361h1M147 361h1M309 361h1M371 361h1M375 361h1M381 361h1M94 362h1M104 362h1M108 362h1M372 362h1M376 362h1M382 362h1M102 363h2M107 363h1M310 363h1M373 363h1M377 363h2M383 363h1M101 364h1M106 364h1M110 364h1M374 364h1M379 364h1M100 365h1M104 365h2M109 365h1M311 365h1M375 365h2M380 365h1M99 366h1M103 366h1M108 366h1M112 366h1M366 366h1M377 366h1M381 366h1M98 367h1M102 367h1M107 367h1M111 367h1M313 367h1M367 367h1M378 367h1M101 368h1M106 368h1M110 368h1M364 368h1M368 368h1M379 368h1M100 369h1M106 369h1M109 369h1M314 369h1M365 369h1M369 369h1M105 370h1M108 370h1M362 370h1M366 370h1M370 370h2M104 371h1M108 371h1M117 371h1M315 371h1M363 371h1M367 371h1M372 371h1M103 372h1M107 372h1M116 372h1M360 372h1M364 372h1M368 372h2M373 372h1M106 373h1M115 373h1M119 373h1M316 373h1M361 373h1M365 373h1M370 373h1M374 373h1M105 374h1M114 374h1M118 374h1M362 374h1M366 374h1M371 374h1M113 375h1M117 375h1M122 375h1M363 375h1M366 375h1M372 375h1M113 376h1M116 376h1M121 376h1M355 376h1M364 376h1M367 376h1M112 377h1M115 377h1M120 377h1M124 377h1M356 377h1M364 377h1M368 377h1M111 378h1M115 378h1M119 378h1M123 378h1M357 378h1M365 378h1M369 378h1M110 379h1M114 379h1M118 379h1M122 379h1M353 379h1M358 379h1M366 379h1M113 380h1M118 380h1M121 380h1M350 380h1M354 380h1M359 380h1M367 380h1M112 381h1M117 381h1M120 381h1M129 381h1M351 381h1M355 381h1M359 381h1M116 382h1M120 382h1M128 382h1M348 382h1M352 382h1M356 382h1M360 382h1M115 383h1M119 383h1M127 383h1M132 383h1M349 383h1M352 383h1M356 383h1M361 383h1M118 384h1M127 384h1M131 384h1M349 384h1M353 384h1M357 384h1M362 384h1M117 385h1M126 385h1M130 385h1M134 385h1M350 385h1M354 385h1M358 385h1M125 386h1M129 386h1M133 386h1M342 386h1M351 386h1M355 386h1M359 386h1M124 387h1M128 387h1M132 387h1M137 387h1M343 387h1M351 387h1M355 387h1M124 388h1M128 388h1M132 388h1M136 388h1M340 388h1M344 388h1M352 388h1M356 388h1M123 389h1M127 389h1M131 389h1M135 389h1M337 389h1M341 389h1M344 389h1M353 389h1M357 389h1M126 390h1M130 390h1M135 390h1M142 390h1M338 390h1M342 390h1M345 390h1M353 390h1M125 391h1M129 391h1M134 391h1M141 391h1M335 391h1M338 391h1M342 391h1M346 391h1M129 392h1M133 392h1M141 392h1M145 392h1M336 392h1M339 392h1M343 392h1M347 392h1M128 393h1M132 393h1M140 393h1M144 393h1M147 393h1M336 393h1M340 393h1M344 393h1M347 393h1M132 394h1M139 394h1M144 394h1M146 394h1M329 394h1M337 394h1M340 394h1M345 394h1M348 394h1M131 395h1M139 395h1M143 395h1M146 395h1M150 395h1M330 395h1M337 395h1M341 395h1M345 395h1M349 395h1M138 396h1M142 396h1M145 396h1M149 396h1M327 396h1M330 396h1M338 396h1M342 396h1M137 397h1M142 397h1M145 397h1M149 397h1M324 397h1M328 397h1M331 397h1M338 397h1M342 397h1M137 398h1M141 398h1M144 398h1M148 398h1M155 398h1M325 398h1M328 398h1M331 398h1M339 398h1M140 399h1M144 399h1M148 399h1M154 399h1M158 399h1M321 399h1M325 399h1M329 399h1M332 399h1M339 399h1M140 400h1M143 400h1M147 400h1M154 400h1M157 400h1M322 400h1M326 400h1M329 400h1M333 400h1M143 401h1M147 401h1M153 401h1M157 401h1M161 401h1M322 401h1M326 401h1M330 401h1M333 401h1M142 402h1M146 402h1M153 402h1M156 402h1M160 402h1M164 402h1M315 402h1M323 402h1M327 402h1M330 402h1M334 402h1M146 403h1M152 403h1M156 403h1M160 403h1M163 403h1M312 403h1M316 403h1M323 403h1M327 403h1M331 403h1M334 403h1M145 404h1M152 404h1M155 404h1M159 404h1M163 404h1M310 404h1M313 404h1M316 404h1M324 404h1M328 404h1M331 404h1M335 404h1M151 405h1M155 405h1M159 405h1M162 405h1M170 405h1M307 405h1M310 405h1M313 405h1M317 405h1M324 405h1M328 405h1M151 406h1M154 406h1M158 406h1M162 406h1M170 406h1M173 406h1M307 406h1M311 406h1M314 406h1M317 406h1M325 406h1M154 407h1M158 407h1M161 407h1M169 407h1M173 407h1M176 407h1M308 407h1M311 407h1M314 407h1M318 407h1M325 407h1M329 407h1M153 408h1M157 408h1M161 408h1M169 408h1M172 408h1M176 408h1M178 408h1M301 408h1M308 408h1M312 408h1M315 408h1M318 408h1M157 409h1M160 409h1M168 409h1M172 409h1M175 409h1M178 409h1M298 409h1M301 409h1M309 409h1M312 409h1M315 409h1M319 409h1M160 410h1M168 410h1M171 410h1M175 410h1M177 410h1M184 410h1M295 410h1M298 410h1M302 410h1M309 410h1M312 410h1M316 410h1M319 410h1M159 411h1M168 411h1M171 411h1M174 411h1M177 411h1M184 411h1M187 411h1M292 411h1M295 411h1M299 411h1M302 411h1M309 411h1M313 411h1M316 411h1M167 412h1M171 412h1M174 412h1M177 412h1M183 412h1M187 412h1M190 412h1M286 412h1M292 412h1M296 412h1M299 412h1M302 412h1M310 412h1M313 412h1M167 413h1M170 413h1M174 413h1M176 413h1M183 413h1M186 413h1M190 413h1M193 413h1M283 413h1M286 413h1M293 413h1M296 413h1M299 413h1M303 413h1M310 413h1M314 413h1M317 413h1M166 414h1M170 414h1M173 414h1M176 414h1M183 414h1M186 414h1M190 414h1M193 414h1M200 414h1M280 414h1M283 414h1M287 414h1M293 414h1M296 414h1M300 414h1M303 414h1M311 414h1M169 415h1M173 415h1M176 415h1M182 415h1M186 415h1M189 415h1M193 415h1M200 415h1M203 415h1M277 415h1M280 415h1M283 415h1M287 415h1M293 415h1M297 415h1M300 415h1M303 415h1M172 416h1M176 416h1M182 416h1M185 416h1M189 416h1M192 416h1M199 416h1M203 416h1M206 416h1M209 416h1M267 416h1M270 416h1M277 416h1M280 416h1M284 416h1M287 416h1M294 416h1M297 416h1M300 416h1M303 416h1M175 417h1M182 417h1M185 417h1M189 417h1M192 417h1M199 417h1M203 417h1M206 417h1M209 417h1M215 417h1M261 417h1M264 417h1M267 417h1M270 417h1M277 417h1M281 417h1M284 417h1M287 417h1M294 417h1M297 417h1M300 417h1M304 417h1M175 418h1M182 418h1M185 418h1M189 418h1M192 418h1M199 418h1M202 418h1M206 418h1M209 418h1M215 418h1M218 418h1M221 418h1M224 418h1M252 418h1M255 418h1M261 418h1M264 418h1M267 418h1M270 418h1M278 418h1M281 418h1M284 418h1M288 418h1M294 418h1M297 418h1M301 418h1M181 419h1M185 419h1M189 419h1M192 419h1M199 419h1M202 419h1M205 419h1M208 419h1M215 419h1M218 419h1M221 419h1M224 419h1M231 419h1M234 419h1M237 419h1M239 419h1M245 419h1M249 419h1M252 419h1M255 419h1M261 419h1M264 419h1M268 419h1M271 419h1M278 419h1M281 419h1M284 419h1M288 419h1M294 419h1M298 419h1M301 419h1M181 420h1M184 420h1M188 420h1M192 420h1M198 420h1M202 420h1M205 420h1M208 420h1M215 420h1M218 420h1M221 420h1M224 420h1M231 420h1M234 420h1M237 420h1M239 420h1M245 420h1M249 420h1M252 420h1M255 420h1M261 420h1M265 420h1M268 420h1M271 420h1M278 420h1M281 420h1M284 420h1M288 420h1M295 420h1M298 420h1M184 421h1M188 421h1M191 421h1M198 421h1M202 421h1M205 421h1M208 421h1M215 421h1M218 421h1M221 421h1M224 421h1M231 421h1M234 421h1M237 421h1M239 421h1M245 421h1M249 421h1M252 421h1M255 421h1M261 421h1M265 421h1M268 421h1M271 421h1M278 421h1M281 421h1M284 421h1M288 421h1M295 421h1M188 422h1M191 422h1M198 422h1M202 422h1M205 422h1M208 422h1M215 422h1M218 422h1M221 422h1M224 422h1M231 422h1M234 422h1M237 422h1M239 422h1M245 422h1M249 422h1M252 422h1M255 422h1M261 422h1M265 422h1M268 422h1M271 422h1M278 422h1M282 422h1M285 422h1M289 422h1M191 423h1M198 423h1M201 423h1M205 423h1M208 423h1M214 423h1M217 423h1M220 423h1M224 423h1M231 423h1M234 423h1M237 423h1M239 423h1M245 423h1M249 423h1M252 423h1M255 423h1M262 423h1M265 423h1M268 423h1M271 423h1M279 423h1M282 423h1M285 423h1M197 424h1M201 424h1M204 424h1M208 424h1M214 424h1M217 424h1M220 424h1M224 424h1M230 424h1M234 424h1M237 424h1M239 424h1M246 424h1M249 424h1M253 424h1M256 424h1M262 424h1M265 424h1M268 424h1M272 424h1M279 424h1M282 424h1M201 425h1M204 425h1M207 425h1M214 425h1M217 425h1M220 425h1M224 425h1M230 425h1M234 425h1M237 425h1M239 425h1M246 425h1M249 425h1M253 425h1M256 425h1M262 425h1M266 425h1M269 425h1M272 425h1M279 425h1M204 426h1M207 426h1M214 426h1M217 426h1M220 426h1M224 426h1M230 426h1M234 426h1M237 426h1M239 426h1M246 426h1M249 426h1M253 426h1M256 426h1M262 426h1M266 426h1M269 426h1M272 426h1M214 427h1M217 427h1M220 427h1M224 427h1M230 427h1M234 427h1M237 427h1M239 427h1M246 427h1M249 427h1M253 427h1M256 427h1M262 427h1M266 427h1M217 428h1M220 428h1M224 428h1M230 428h1M234 428h1M237 428h1M239 428h1M246 428h1M249 428h1M253 428h1M256 428h1M262 428h1M230 429h1M234 429h1M237 429h1M239 429h1M246 429h1"/>
<path stroke="#ff0000" d="M323 88h1M317 89h2M322 89h1M319 90h1M322 90h1M319 91h1M322 91h1M318 92h1M322 92h1M318 93h1M322 93h1M391 93h3M401 93h3M317 94h1M322 94h1M390 94h1M394 94h1M400 94h1M404 94h1M317 95h8M389 95h1M395 95h1M399 95h1M405 95h1M322 96h1M389 96h1M395 96h1M399 96h1M405 96h1M389 97h1M395 97h1M399 97h1M405 97h1M390 98h1M395 98h1M399 98h1M404 98h1M391 99h1M396 99h1M398 99h1M403 99h1M396 100h1M398 100h1M397 101h1M397 102h1M397 103h1M397 104h1M397 105h1M397 106h1M397 107h1M397 108h1M397 109h1M315 110h5M313 111h2M320 111h2M312 112h1M322 112h1M311 113h1M323 113h1M310 114h1M324 114h1M310 115h1M324 115h1M309 116h1M325 116h1M309 117h1M325 117h1M309 118h1M317 118h1M325 118h1M309 119h1M325 119h1M414 119h4M309 120h1M325 120h1M416 120h2M310 121h1M324 121h1M415 121h1M417 121h1M310 122h1M324 122h1M411 122h2M414 122h1M417 122h1M311 123h1M323 123h1M410 123h1M413 123h1M312 124h1M322 124h1M409 124h1M414 124h1M313 125h2M320 125h2M409 125h1M414 125h1M315 126h5M410 126h1M413 126h1M146 127h1M411 127h2M145 128h1M135 129h2M144 129h1M137 130h1M144 130h1M138 131h1M144 131h1M138 132h1M144 132h1M138 133h1M144 133h1M137 134h1M144 134h1M137 135h1M144 135h1M136 136h1M144 136h1M624 136h1M626 136h1M628 136h1M136 137h1M144 137h1M625 137h1M627 137h1M629 137h1M631 137h1M135 138h1M144 138h1M304 138h1M625 138h1M627 138h1M629 138h3M135 139h1M144 139h1M303 139h3M625 139h1M627 139h1M629 139h1M631 139h1M134 140h1M144 140h1M304 140h1M625 140h1M627 140h1M629 140h1M631 140h1M134 141h15M625 141h1M627 141h1M629 141h1M631 141h1M50 142h3M144 142h1M355 142h6M625 142h1M627 142h1M629 142h1M631 142h1M48 143h2M53 143h2M144 143h1M301 143h1M359 143h2M625 143h1M627 143h1M630 143h1M48 144h1M54 144h1M358 144h1M360 144h1M629 144h1M631 144h1M47 145h1M55 145h1M357 145h1M360 145h1M47 146h1M51 146h1M55 146h1M302 146h1M356 146h1M360 146h1M47 147h1M55 147h1M355 147h1M360 147h1M48 148h1M54 148h1M347 148h5M354 148h1M48 149h2M53 149h2M303 149h1M346 149h2M351 149h3M50 150h3M345 150h1M353 150h1M344 151h2M353 151h2M156 152h1M303 152h1M344 152h1M354 152h1M155 153h3M344 153h1M354 153h1M156 154h1M344 154h1M354 154h1M304 155h1M344 155h2M353 155h2M345 156h1M353 156h1M346 157h2M351 157h2M305 158h1M347 158h5M306 161h1M38 164h5M306 164h1M37 165h1M43 165h1M36 166h1M44 166h1M35 167h1M45 167h1M307 167h1M34 168h1M46 168h1M34 169h1M46 169h1M34 170h1M46 170h1M308 170h1M34 171h1M46 171h1M34 172h1M46 172h1M35 173h1M45 173h1M309 173h1M36 174h1M44 174h1M36 175h1M44 175h1M32 176h1M36 176h1M44 176h1M310 176h1M625 176h1M628 176h1M630 176h2M33 177h1M35 177h1M45 177h1M624 177h2M627 177h1M629 177h1M632 177h1M34 178h1M46 178h1M625 178h1M627 178h1M630 178h1M632 178h1M47 179h1M310 179h1M625 179h1M627 179h1M630 179h2M48 180h1M625 180h1M627 180h1M632 180h1M626 181h1M632 181h1M311 182h1M626 182h1M632 182h1M626 183h1M632 183h1M631 184h1M312 185h1M313 188h1M313 191h1M314 194h1M315 197h1M316 200h1M317 203h1M317 206h1M318 209h1M319 212h1M320 215h1M625 216h2M630 216h2M624 217h1M627 217h1M629 217h1M632 217h1M321 218h1M624 218h1M627 218h1M629 218h1M632 218h1M625 219h1M628 219h1M631 219h1M628 220h1M321 221h1M628 221h1M628 222h1M628 223h1M322 224h1M628 224h1M323 227h1M324 230h1M324 233h1M325 236h1M326 239h1M327 242h1M328 245h1M328 248h1M329 251h1M73 252h4M75 253h2M74 254h1M76 254h1M330 254h1M70 255h2M73 255h1M76 255h1M69 256h1M72 256h1M68 257h1M73 257h1M331 257h1M68 258h1M73 258h1M69 259h1M72 259h1M70 260h2M331 260h1M332 263h1M333 266h1M627 266h3M625 267h2M630 267h2M625 268h1M631 268h1M334 269h1M624 269h1M632 269h1M624 270h1M628 270h1M632 270h1M624 271h1M632 271h1M335 272h1M625 272h1M631 272h1M625 273h2M630 273h2M627 274h3M335 275h1M336 278h1M337 281h1M338 284h1M338 287h1M339 290h1M629 306h4M631 307h2M630 308h1M632 308h1M626 309h2M629 309h1M632 309h1M625 310h1M628 310h1M624 311h1M629 311h1M624 312h1M629 312h1M625 313h1M628 313h1M626 314h2M631 316h1M625 317h2M630 317h1M627 318h1M630 318h1M627 319h1M630 319h1M626 320h1M630 320h1M626 321h1M630 321h1M625 322h1M630 322h1M625 323h8M630 324h1M341 367h3M339 368h2M344 368h2M339 369h1M345 369h1M338 370h1M346 370h1M338 371h1M342 371h1M346 371h1M338 372h1M346 372h1M339 373h1M345 373h1M339 374h2M344 374h2M341 375h3M283 437h5M286 438h2M285 439h1M287 439h1M284 440h1M287 440h1M283 441h1M287 441h1M282 442h1M273 443h1M281 443h1M255 444h1M274 444h1M280 444h1M249 445h2M254 445h1M275 445h1M279 445h1M251 446h1M254 446h1M276 446h1M278 446h1M251 447h1M254 447h1M277 447h1M250 448h1M254 448h1M276 448h1M278 448h1M250 449h1M254 449h1M275 449h1M279 449h1M249 450h1M254 450h1M274 450h1M280 450h1M249 451h8M273 451h1M281 451h1M254 452h1M272 452h1M271 453h1"/>
<path stroke="#00ffff" d="M247 124h1M250 126h1M253 128h1M256 130h1M259 132h1M262 134h1M265 136h1M268 137h1M271 139h1M274 141h1M277 143h1M280 145h1M283 147h1M286 149h1M289 151h1M292 153h1M295 155h1M298 157h1M301 159h1M304 161h1M307 162h1M310 164h1M313 166h1M316 168h1M319 170h1M322 172h1M325 174h1M328 176h1M333 177h2M331 178h1M334 179h1M333 180h2M334 181h1M337 182h1M334 183h1M335 185h1M339 185h1M334 186h1M335 187h1M339 187h1M334 189h2M339 189h1M335 191h1M339 191h1M334 192h1M335 193h1M339 193h1M334 195h2M339 195h1M335 197h1M339 197h1M334 198h1M335 199h1M339 199h1M335 201h1M339 201h1M335 203h1M339 203h1M335 204h1M336 205h1M339 205h1M335 207h2M339 207h1M336 209h1M339 209h1M335 210h1M336 211h1M339 211h1M335 213h2M339 213h1M336 215h1M339 215h1M335 216h1M336 217h1M339 217h1M336 219h1M339 219h1M336 221h1M339 221h1M336 222h1M336 223h1M339 223h1M336 225h2M339 225h1M337 227h1M339 227h1M336 228h1M337 229h1M339 229h1M336 231h2M339 231h1M337 233h1M339 233h1M337 234h1M337 235h1M339 235h1M337 237h1M339 237h1M337 239h1M340 239h1M337 240h1M337 241h1M340 241h1M337 243h1M340 243h1M338 245h1M340 245h1M337 246h1M338 247h1M340 247h1M337 249h2M340 249h1M338 251h1M340 251h1M338 252h1M338 253h1M340 253h1M338 255h1M340 255h1M338 257h1M340 257h1M338 258h1M338 259h1M340 259h1M338 261h1M340 261h1M338 263h1M340 263h1M338 264h1M339 265h2M338 267h3M339 269h2M339 270h1M339 271h2M339 273h2M339 275h2M339 276h1M339 277h2M339 279h2M339 281h2M339 282h1M339 283h2M340 285h1M340 287h1M340 288h1M340 289h1M340 291h1M340 293h1"/>
<path stroke="#00ff00" d="M193 25h1M207 25h1M194 26h1M206 26h1M224 26h1M228 26h1M195 27h11M225 27h3M197 28h1M203 28h1M224 28h1M228 28h1M197 29h1M203 29h1M224 29h1M228 29h1M197 30h1M203 30h1M224 30h1M228 30h1M197 31h1M203 31h1M225 31h3M197 32h1M203 32h1M226 32h1M197 33h1M203 33h1M224 33h5M197 34h1M203 34h1M226 34h1M197 35h1M203 35h1M197 36h1M203 36h1M197 37h1M203 37h1M197 38h1M203 38h1M195 39h11M194 40h1M206 40h1M193 41h1M207 41h1M239 87h1M251 87h1M240 88h1M250 88h1M241 89h1M249 89h1M241 90h1M249 90h1M241 91h1M245 91h1M249 91h1M241 92h1M245 92h1M249 92h1M241 93h9M241 94h1M245 94h1M249 94h1M241 95h1M245 95h1M249 95h1M240 96h1M245 96h1M250 96h1M239 97h1M245 97h1M251 97h1M245 98h1M244 99h3M243 100h1M246 100h2M243 101h1M247 101h1M243 102h1M246 102h2M133 103h1M139 103h1M244 103h3M134 104h1M138 104h1M134 105h1M136 105h1M138 105h1M134 106h5M134 107h1M136 107h1M138 107h1M133 108h1M136 108h1M139 108h1M136 109h1M135 110h1M137 110h1M136 111h1M247 119h1M246 120h3M247 121h1M249 128h1M335 128h1M343 128h1M336 129h1M342 129h1M337 130h5M336 131h1M342 131h1M251 132h1M335 132h1M343 132h1M335 133h1M343 133h1M335 134h1M343 134h1M335 135h1M343 135h1M254 136h1M335 136h1M343 136h1M336 137h1M342 137h1M337 138h5M339 139h1M256 140h1M339 140h1M339 141h1M335 142h9M339 143h1M258 144h1M339 144h1M260 148h1M262 152h1M265 156h1M627 158h3M626 159h1M630 159h1M267 160h1M626 160h1M630 160h1M624 161h4M629 161h4M624 163h9M269 164h1M271 168h1M337 170h1M336 171h3M273 172h1M337 172h1M276 176h1M278 180h1M280 184h1M282 188h1M284 192h1M287 196h1M624 196h1M632 196h1M625 197h1M631 197h1M626 198h1M630 198h1M626 199h1M630 199h1M289 200h1M624 200h9M626 201h1M630 201h1M626 202h1M630 202h1M625 203h1M631 203h1M291 204h1M624 204h1M632 204h1M293 208h1M295 212h1M298 216h1M300 220h1M302 224h1M304 228h1M306 232h1M309 236h1M627 237h3M625 238h2M630 238h2M624 239h1M629 239h1M632 239h1M311 240h1M625 240h2M629 240h1M632 240h1M624 241h1M627 241h1M630 241h2M624 242h1M627 242h1M632 242h1M625 243h2M630 243h2M313 244h1M627 244h3M28 248h1M32 248h1M315 248h1M29 249h3M28 250h1M32 250h1M28 251h1M32 251h1M28 252h1M32 252h1M317 252h1M29 253h3M30 254h1M28 255h5M30 256h1M320 256h1M322 260h1M324 264h1M326 268h1M328 272h1M331 276h1M333 280h1M335 284h1M626 286h1M630 286h1M627 287h3M337 288h1M626 288h1M630 288h1M626 289h1M630 289h1M626 290h1M630 290h1M627 291h3M339 292h1M628 292h1M626 293h5M628 294h1M393 295h1M397 295h1M394 296h3M393 297h1M397 297h1M393 298h1M397 298h1M434 298h1M440 298h1M446 298h1M393 299h1M397 299h1M433 299h2M439 299h2M445 299h1M394 300h3M433 300h1M435 300h1M439 300h1M441 300h1M445 300h1M395 301h1M432 301h1M435 301h1M438 301h1M441 301h1M444 301h1M393 302h5M431 302h1M435 302h1M437 302h1M441 302h1M443 302h1M395 303h1M431 303h1M436 303h2M442 303h2M430 304h1M436 304h1M442 304h1M434 308h1M440 308h1M446 308h1M433 309h2M439 309h2M445 309h1M433 310h1M435 310h1M439 310h1M441 310h1M445 310h1M432 311h1M435 311h1M438 311h1M441 311h1M444 311h1M431 312h1M435 312h1M437 312h1M441 312h1M443 312h1M431 313h1M436 313h2M442 313h2M430 314h1M436 314h1M442 314h1M424 328h1M430 328h1M425 329h1M429 329h1M425 330h1M427 330h1M429 330h1M425 331h5M425 332h1M427 332h1M429 332h1M424 333h1M427 333h1M430 333h1M427 334h1M426 335h1M428 335h1M427 336h1M625 336h1M631 336h1M626 337h1M630 337h1M626 338h1M628 338h1M630 338h1M626 339h5M626 340h1M628 340h1M630 340h1M625 341h1M628 341h1M631 341h1M628 342h1M627 343h1M629 343h1M628 344h1M79 373h5M78 374h1M84 374h1M77 375h1M85 375h1M77 376h1M85 376h1M77 377h1M85 377h1M78 378h1M84 378h1M73 379h7M83 379h7M156 382h1M160 382h1M73 383h17M157 383h3M156 384h1M160 384h1M156 385h1M160 385h1M156 386h1M160 386h1M157 387h3M158 388h1M156 389h5M158 390h1"/>
<path stroke="#0000ff" d="M121 61h3M120 62h1M124 62h2M121 63h1M126 63h1M122 64h1M126 64h1M122 65h1M126 65h1M122 66h1M126 66h1M121 67h1M126 67h1M120 68h1M124 68h2M121 69h3M98 74h8M96 75h2M95 76h1M105 76h4M94 77h1M104 77h1M108 77h1M93 78h1M103 78h1M109 78h1M93 79h1M103 79h1M109 79h1M95 80h4M103 80h1M109 80h1M94 81h1M98 81h1M104 81h1M108 81h1M93 82h1M99 82h1M105 82h4M93 83h1M99 83h1M109 83h1M93 84h1M99 84h1M108 84h1M94 85h1M98 85h1M108 85h1M95 86h4M106 86h2M104 87h2M97 88h7M199 92h5M198 93h1M204 93h2M197 94h1M206 94h1M198 95h1M207 95h1M199 96h1M208 96h1M200 97h1M209 97h1M201 98h1M209 98h1M201 99h1M209 99h1M201 100h1M209 100h1M201 101h1M209 101h1M200 102h1M209 102h1M200 103h1M208 103h1M199 104h1M208 104h1M198 105h1M207 105h1M197 106h1M206 106h1M198 107h1M204 107h2M199 108h5M209 122h1M208 123h3M209 124h1M379 148h1M382 148h1M385 148h1M379 149h1M381 149h1M383 149h1M385 149h1M379 150h1M382 150h1M385 150h1M380 151h1M384 151h1M381 152h3M382 153h1M380 154h5M382 155h1M382 156h1M624 166h1M626 166h1M628 166h1M625 167h1M627 167h1M629 167h1M625 168h1M627 168h1M629 168h1M625 169h1M627 169h1M629 169h1M625 170h1M627 170h1M629 170h1M625 171h1M627 171h1M629 171h1M625 172h1M627 172h1M629 172h1M632 172h1M625 173h1M627 173h1M629 173h1M632 173h1M365 174h1M371 174h1M377 174h1M630 174h2M80 175h1M83 175h1M86 175h1M365 175h1M371 175h1M377 175h1M79 176h9M364 176h3M369 176h5M376 176h3M80 177h1M83 177h1M86 177h1M365 177h1M371 177h1M377 177h1M81 178h1M83 178h1M85 178h1M365 178h1M371 178h1M377 178h1M82 179h3M366 179h1M371 179h1M376 179h1M83 180h1M343 180h1M367 180h1M371 180h1M375 180h1M81 181h5M342 181h3M368 181h1M371 181h1M374 181h1M83 182h1M343 182h1M369 182h5M83 183h1M371 183h1M371 184h1M371 185h1M367 186h9M371 187h1M371 188h1M371 189h1M371 190h1M437 191h1M453 191h1M438 192h1M452 192h1M439 193h1M451 193h1M440 194h1M450 194h1M440 195h1M450 195h1M441 196h1M449 196h1M441 197h1M449 197h1M441 198h1M449 198h1M437 199h17M441 200h1M449 200h1M441 201h1M449 201h1M441 202h1M449 202h1M440 203h1M450 203h1M440 204h1M450 204h1M439 205h1M451 205h1M438 206h1M452 206h1M624 206h1M632 206h1M437 207h1M453 207h1M625 207h1M631 207h1M626 208h1M630 208h1M626 209h1M630 209h1M624 210h9M626 211h1M630 211h1M626 212h1M630 212h1M625 213h1M631 213h1M624 214h1M632 214h1M445 222h1M448 222h1M451 222h1M444 223h9M445 224h1M448 224h1M451 224h1M446 225h1M448 225h1M450 225h1M447 226h3M448 227h1M446 228h5M448 229h1M448 230h1M627 246h3M626 247h1M630 247h1M625 248h1M631 248h1M625 249h1M631 249h1M625 250h1M631 250h1M626 251h1M630 251h1M624 252h1M626 252h1M630 252h1M625 253h1M631 253h1M632 254h1M626 276h3M625 277h1M629 277h2M626 278h1M631 278h1M627 279h1M631 279h1M627 280h1M631 280h1M627 281h1M631 281h1M626 282h1M631 282h1M625 283h1M629 283h2M626 284h3M344 295h1M343 296h3M344 297h1M359 299h1M364 299h3M371 299h1M359 300h1M363 300h1M366 300h2M371 300h1M359 301h1M363 301h1M367 301h1M371 301h1M359 302h1M363 302h1M366 302h2M371 302h1M359 303h1M364 303h3M371 303h1M360 304h1M370 304h1M361 305h1M369 305h1M362 306h1M368 306h1M363 307h5M365 308h1M365 309h1M365 310h1M361 311h9M365 312h1M365 313h1M365 314h1M365 315h1M625 346h1M628 346h1M631 346h1M624 347h9M625 348h1M628 348h1M631 348h1M626 349h1M628 349h1M630 349h1M627 350h3M628 351h1M626 352h5M628 353h1M628 354h1M625 356h1M628 356h1M631 356h1M625 357h1M627 357h1M629 357h1M631 357h1M625 358h1M628 358h1M631 358h1M626 359h1M630 359h1M627 360h3M628 361h1M626 362h5M628 363h1M628 364h1M250 402h3M249 403h1M253 403h2M250 404h1M255 404h1M251 405h1M255 405h1M251 406h1M255 406h1M251 407h1M255 407h1M250 408h1M255 408h1M249 409h1M253 409h2M250 410h3M143 423h1M146 423h1M149 423h1M143 424h1M145 424h1M147 424h1M149 424h1M143 425h1M146 425h1M149 425h1M144 426h1M148 426h1M145 427h3M146 428h1M144 429h5M146 430h1M164 430h1M168 430h1M172 430h1M146 431h1M165 431h1M167 431h1M169 431h1M171 431h1M173 431h1M166 432h1M170 432h1M174 432h1M166 433h1M170 433h1M174 433h1M166 434h1M170 434h1M174 434h1M166 435h1M170 435h1M174 435h1M166 436h1M170 436h1M174 436h1M166 437h1M170 437h1M174 437h1M166 438h1M170 438h1M174 438h1M166 439h1M170 439h1M174 439h1M166 440h1M170 440h1M174 440h1M166 441h1M170 441h1M174 441h1M180 441h1M166 442h1M170 442h1M174 442h1M179 442h3M166 443h1M170 443h1M174 443h1M180 443h1M166 444h1M170 444h1M174 444h1M180 444h1M175 445h1M179 445h1M176 446h3"/>
<path stroke="#ffff00" d="M300 32h1M312 32h1M301 33h1M311 33h1M301 34h1M311 34h1M302 35h1M309 35h2M303 36h6M302 37h2M309 37h2M301 38h2M310 38h2M301 39h1M311 39h1M300 40h1M311 40h2M300 41h1M312 41h1M300 42h1M312 42h1M300 43h1M312 43h1M300 44h1M311 44h2M301 45h1M311 45h1M301 46h2M310 46h2M302 47h2M309 47h2M331 47h3M304 48h5M330 48h1M334 48h1M330 49h1M334 49h1M330 50h1M334 50h1M331 51h3M332 52h1M330 53h5M332 54h1M332 55h1M225 68h1M223 69h5M225 70h1M225 71h4M225 72h1M229 72h1M225 73h1M229 73h1M225 74h1M228 74h1M225 75h1M228 75h1M229 76h1M262 90h5M261 91h1M267 91h1M260 92h1M268 92h1M260 93h1M268 93h1M260 94h1M268 94h1M260 95h1M268 95h1M260 96h1M268 96h1M261 97h1M267 97h1M262 98h5M264 99h1M264 100h1M264 101h1M260 102h9M264 103h1M264 104h1M264 105h1M264 106h1M255 119h1M254 120h3M255 121h1M248 124h1M251 125h1M254 125h1M624 146h1M626 146h1M628 146h1M625 147h1M627 147h1M629 147h1M631 147h1M625 148h1M627 148h1M629 148h3M625 149h1M627 149h1M629 149h1M631 149h1M625 150h1M627 150h1M629 150h1M631 150h1M625 151h1M627 151h1M629 151h1M631 151h1M625 152h1M627 152h1M629 152h1M631 152h1M625 153h1M627 153h1M630 153h1M629 154h1M631 154h1M360 157h1M360 158h1M356 159h9M360 160h1M360 161h1M360 162h1M360 163h1M362 163h5M360 164h2M367 164h1M360 165h1M368 165h1M360 166h1M368 166h1M360 167h1M368 167h1M360 168h1M367 168h1M360 169h1M366 169h1M360 170h1M366 170h1M360 171h1M366 171h1M338 172h2M367 172h1M338 173h1M368 173h1M333 174h1M334 175h1M336 178h1M337 179h1M338 182h1M339 183h1M626 186h1M629 186h1M632 186h1M625 187h2M628 187h2M631 187h1M625 188h1M627 188h2M630 188h2M624 189h1M627 189h1M630 189h1M626 191h1M629 191h1M632 191h1M625 192h2M628 192h2M631 192h1M625 193h1M627 193h2M630 193h2M624 194h1M627 194h1M630 194h1M405 218h3M404 219h1M408 219h1M404 220h1M408 220h1M404 221h1M408 221h1M405 222h3M406 223h1M404 224h5M406 225h1M406 226h1M625 226h1M631 226h1M626 227h1M630 227h1M627 228h3M626 229h1M630 229h1M625 230h1M631 230h1M625 231h1M631 231h1M625 232h1M631 232h1M626 233h1M630 233h1M627 234h3M25 271h1M29 271h1M33 271h1M26 272h1M28 272h1M30 272h1M32 272h1M34 272h1M27 273h1M31 273h1M35 273h1M39 273h1M27 274h1M31 274h1M35 274h1M38 274h2M27 275h1M31 275h1M35 275h1M37 275h1M39 275h1M27 276h1M31 276h1M35 276h2M39 276h1M27 277h1M31 277h1M35 277h1M39 277h1M27 278h1M31 278h1M35 278h1M39 278h1M27 279h1M31 279h1M35 279h1M39 279h1M27 280h1M31 280h1M35 280h1M39 280h1M27 281h1M31 281h1M35 281h1M39 281h1M27 282h1M31 282h1M35 282h1M39 282h1M27 283h1M31 283h1M35 283h1M39 283h1M27 284h1M31 284h1M36 284h1M38 284h1M27 285h1M31 285h1M37 285h1M36 286h1M38 286h1M35 287h1M39 287h1M627 296h3M626 297h1M630 297h1M626 298h1M630 298h1M626 299h1M630 299h1M627 300h3M628 301h1M626 302h5M628 303h1M628 304h1M95 322h3M94 323h1M98 323h1M94 324h1M98 324h1M94 325h1M98 325h1M95 326h3M627 326h1M96 327h1M625 327h5M94 328h5M627 328h1M96 329h1M627 329h4M96 330h1M627 330h1M631 330h1M627 331h1M631 331h1M627 332h1M630 332h1M627 333h1M630 333h1M631 334h1M64 351h3M63 352h1M67 352h1M63 353h1M67 353h1M63 354h1M67 354h1M64 355h3M65 356h1M63 357h5M65 358h1M65 359h1M371 389h1M377 389h1M381 389h3M370 390h2M376 390h1M378 390h1M380 390h1M384 390h1M369 391h1M371 391h1M376 391h1M379 391h1M385 391h1M371 392h1M375 392h1M380 392h1M385 392h1M371 393h1M375 393h1M381 393h1M385 393h1M371 394h1M375 394h1M382 394h1M384 394h1M371 395h1M375 395h1M381 395h3M371 396h1M375 396h1M384 396h1M371 397h1M375 397h1M385 397h1M372 398h1M374 398h1M385 398h1M373 399h1M385 399h1M373 400h1M385 400h1M373 401h1M385 401h1M373 402h1M385 402h1M373 403h1M385 403h1M384 404h1M383 405h1M354 409h1M352 410h5M354 411h1M354 412h4M354 413h1M358 413h1M354 414h1M358 414h1M354 415h1M357 415h1M354 416h1M357 416h1M358 417h1"/>
</g>
<g class="gl">
<text class="hn" transform="translate(75.5,279) scale(0.76,1)" x="0.00" y="0" fill="#ff0000">1</text>
<text class="hn" transform="translate(108.5,348) scale(0.76,1)" x="0.00" y="0" fill="#ffff00">2</text>
<text class="hn" transform="translate(180.5,401) scale(0.76,1)" x="0.00" y="0" fill="#00ff00">3</text>
<text class="hn" transform="translate(276.5,407) scale(0.76,1)" x="0.00" y="0" fill="#0000ff">4</text>
<text class="hn" transform="translate(360.5,360) scale(0.76,1)" x="0.00" y="0" fill="#ff0000">5</text>
<text class="hn" transform="translate(402.5,284) scale(0.76,1)" x="0.00" y="0" fill="#ffff00">6</text>
<text class="hn" transform="translate(403.5,209) scale(0.76,1)" x="0.00" y="0" fill="#00ff00">7</text>
<text class="hn" transform="translate(370.5,140) scale(0.76,1)" x="0.00" y="0" fill="#0000ff">8</text>
<text class="hn" transform="translate(298.5,87) scale(0.76,1)" x="0.00" y="0" fill="#ff0000">9</text>
<text class="hn" transform="translate(202.5,81) scale(0.76,1)" x="-5.26 5.26" y="0" fill="#ffff00">10</text>
<text class="hn" transform="translate(118.5,128) scale(0.76,1)" x="-5.26 5.26" y="0" fill="#00ff00">11</text>
<text class="hn" transform="translate(76.5,204) scale(0.76,1)" x="-5.26 5.26" y="0" fill="#0000ff">12</text>
</g>
<g class="tx" xml:space="preserve">
<text x="486" y="14" fill="#ffffff" textLength="84">Astrolog 5.41G</text>
<text x="486" y="24" fill="#c0c0c0" textLength="114">Chart of the Moment</text>
<text x="486" y="34" fill="#ffffff" textLength="108">Mon April 20, 2026</text>
<text x="492" y="44" fill="#ffffff" textLength="144">3:05:00pm (DT -8:00 GMT)</text>
<text x="486" y="54" fill="#c0c0c0" textLength="102">San Francisco, CA</text>
<text x="486" y="64" fill="#c0c0c0" textLength="132">122°41'00&quot;W 37°79'00&quot;N</text>
<text x="486" y="74" fill="#c0c0c0" textLength="96">Placidus houses.</text>
<text x="486" y="84" fill="#c0c0c0" textLength="126">Tropical, Geocentric.</text>
<text x="486" y="94" fill="#ffffff" textLength="150">Julian Day = 2461151.4201</text>
<text x="486" y="104" fill="#c0c0c0" textLength="126">Obliquity = 23°26'09&quot;</text>
<text x="486" y="114" fill="#c0c0c0" textLength="138">Sidereal time:  3:50:17</text>
<text x="486" y="124" fill="#c0c0c0" textLength="102">DeltaT =  95.5836</text>
<text x="492" y="144" fill="#ff0000" textLength="66">1st house: </text>
<text x="564" y="144" fill="#ffff00" textLength="36">3Vir47</text>
<text x="492" y="154" fill="#ffff00" textLength="66">2nd house: </text>
<text x="558" y="154" fill="#ffff00" textLength="42">27Vir51</text>
<text x="492" y="164" fill="#00ff00" textLength="66">3rd house: </text>
<text x="558" y="164" fill="#00ff00" textLength="42">26Lib45</text>
<text x="492" y="174" fill="#0000ff" textLength="66">4th house: </text>
<text x="558" y="174" fill="#0000ff" textLength="42">29Sco46</text>
<text x="492" y="184" fill="#ff0000" textLength="66">5th house: </text>
<text x="564" y="184" fill="#ffff00" textLength="36">3Cap53</text>
<text x="492" y="194" fill="#ffff00" textLength="66">6th house: </text>
<text x="564" y="194" fill="#00ff00" textLength="36">5Aqu39</text>
<text x="492" y="204" fill="#00ff00" textLength="66">7th house: </text>
<text x="564" y="204" fill="#0000ff" textLength="36">3Pis47</text>
<text x="492" y="214" fill="#0000ff" textLength="66">8th house: </text>
<text x="558" y="214" fill="#0000ff" textLength="42">27Pis51</text>
<text x="492" y="224" fill="#ff0000" textLength="66">9th house: </text>
<text x="558" y="224" fill="#ff0000" textLength="42">26Ari45</text>
<text x="486" y="234" fill="#ffff00" textLength="72">10th house: </text>
<text x="558" y="234" fill="#ffff00" textLength="42">29Tau46</text>
<text x="486" y="244" fill="#00ff00" textLength="72">11th house: </text>
<text x="564" y="244" fill="#0000ff" textLength="36">3Can53</text>
<text x="486" y="254" fill="#0000ff" textLength="72">12th house: </text>
<text x="564" y="254" fill="#ff0000" textLength="36">5Leo39</text>
<text x="492" y="274" fill="#ff0000" textLength="24">Sun:</text>
<text x="528" y="274" fill="#ffff00" textLength="36">0Tau50</text>
<text x="576" y="274" fill="#c0c0c0" textLength="42">+ 0°00'</text>
<text x="486" y="284" fill="#0000ff" textLength="30">Moon:</text>
<text x="522" y="284" fill="#00ff00" textLength="42">18Gem27</text>
<text x="576" y="284" fill="#c0c0c0" textLength="42">+ 5°00'</text>
<text x="486" y="294" fill="#00ff00" textLength="30">Merc:</text>
<text x="528" y="294" fill="#ff0000" textLength="36">8Ari38</text>
<text x="576" y="294" fill="#c0c0c0" textLength="42">- 2°36'</text>
<text x="486" y="304" fill="#ffff00" textLength="30">Venu:</text>
<text x="522" y="304" fill="#ffff00" textLength="42">26Tau03</text>
<text x="576" y="304" fill="#c0c0c0" textLength="42">+ 0°27'</text>
<text x="486" y="314" fill="#ff0000" textLength="30">Mars:</text>
<text x="528" y="314" fill="#ff0000" textLength="36">8Ari37</text>
<text x="576" y="314" fill="#c0c0c0" textLength="42">- 0°57'</text>
<text x="486" y="324" fill="#ff0000" textLength="30">Jupi:</text>
<text x="522" y="324" fill="#0000ff" textLength="42">17Can37</text>
<text x="576" y="324" fill="#c0c0c0" textLength="42">+ 0°23'</text>
<text x="486" y="334" fill="#ffff00" textLength="30">Satu:</text>
<text x="528" y="334" fill="#ff0000" textLength="36">7Ari59</text>
<text x="576" y="334" fill="#c0c0c0" textLength="42">- 2°09'</text>
<text x="486" y="344" fill="#00ff00" textLength="30">Uran:</text>
<text x="522" y="344" fill="#ffff00" textLength="42">29Tau44</text>
<text x="576" y="344" fill="#c0c0c0" textLength="42">- 0°10'</text>
<text x="486" y="354" fill="#0000ff" textLength="30">Nept:</text>
<text x="528" y="354" fill="#ff0000" textLength="36">2Ari56</text>
<text x="576" y="354" fill="#c0c0c0" textLength="42">- 1°19'</text>
<text x="486" y="364" fill="#0000ff" textLength="30">Plut:</text>
<text x="528" y="364" fill="#00ff00" textLength="36">5Aqu27</text>
<text x="576" y="364" fill="#c0c0c0" textLength="42">- 4°01'</text>
<text x="486" y="384" fill="#c0c0c0" textLength="108">Fire: 4, Earth: 3,</text>
<text x="486" y="394" fill="#c0c0c0" textLength="102">Air : 2, Water: 1</text>
<text x="486" y="404" fill="#c0c0c0" textLength="132">Car: 5, Fix: 4, Mut: 1</text>
<text x="486" y="414" fill="#c0c0c0" textLength="90">Yang: 6, Yin: 4</text>
<text x="486" y="424" fill="#c0c0c0" textLength="132">M: 9, N: 1, A: 2, D: 8</text>
<text x="486" y="434" fill="#c0c0c0" textLength="132">Ang: 1, Suc: 6, Cad: 3</text>
<text x="486" y="444" fill="#c0c0c0" textLength="108">Learn: 9, Share: 1</text>
</g>
</svg>
</body></html>
